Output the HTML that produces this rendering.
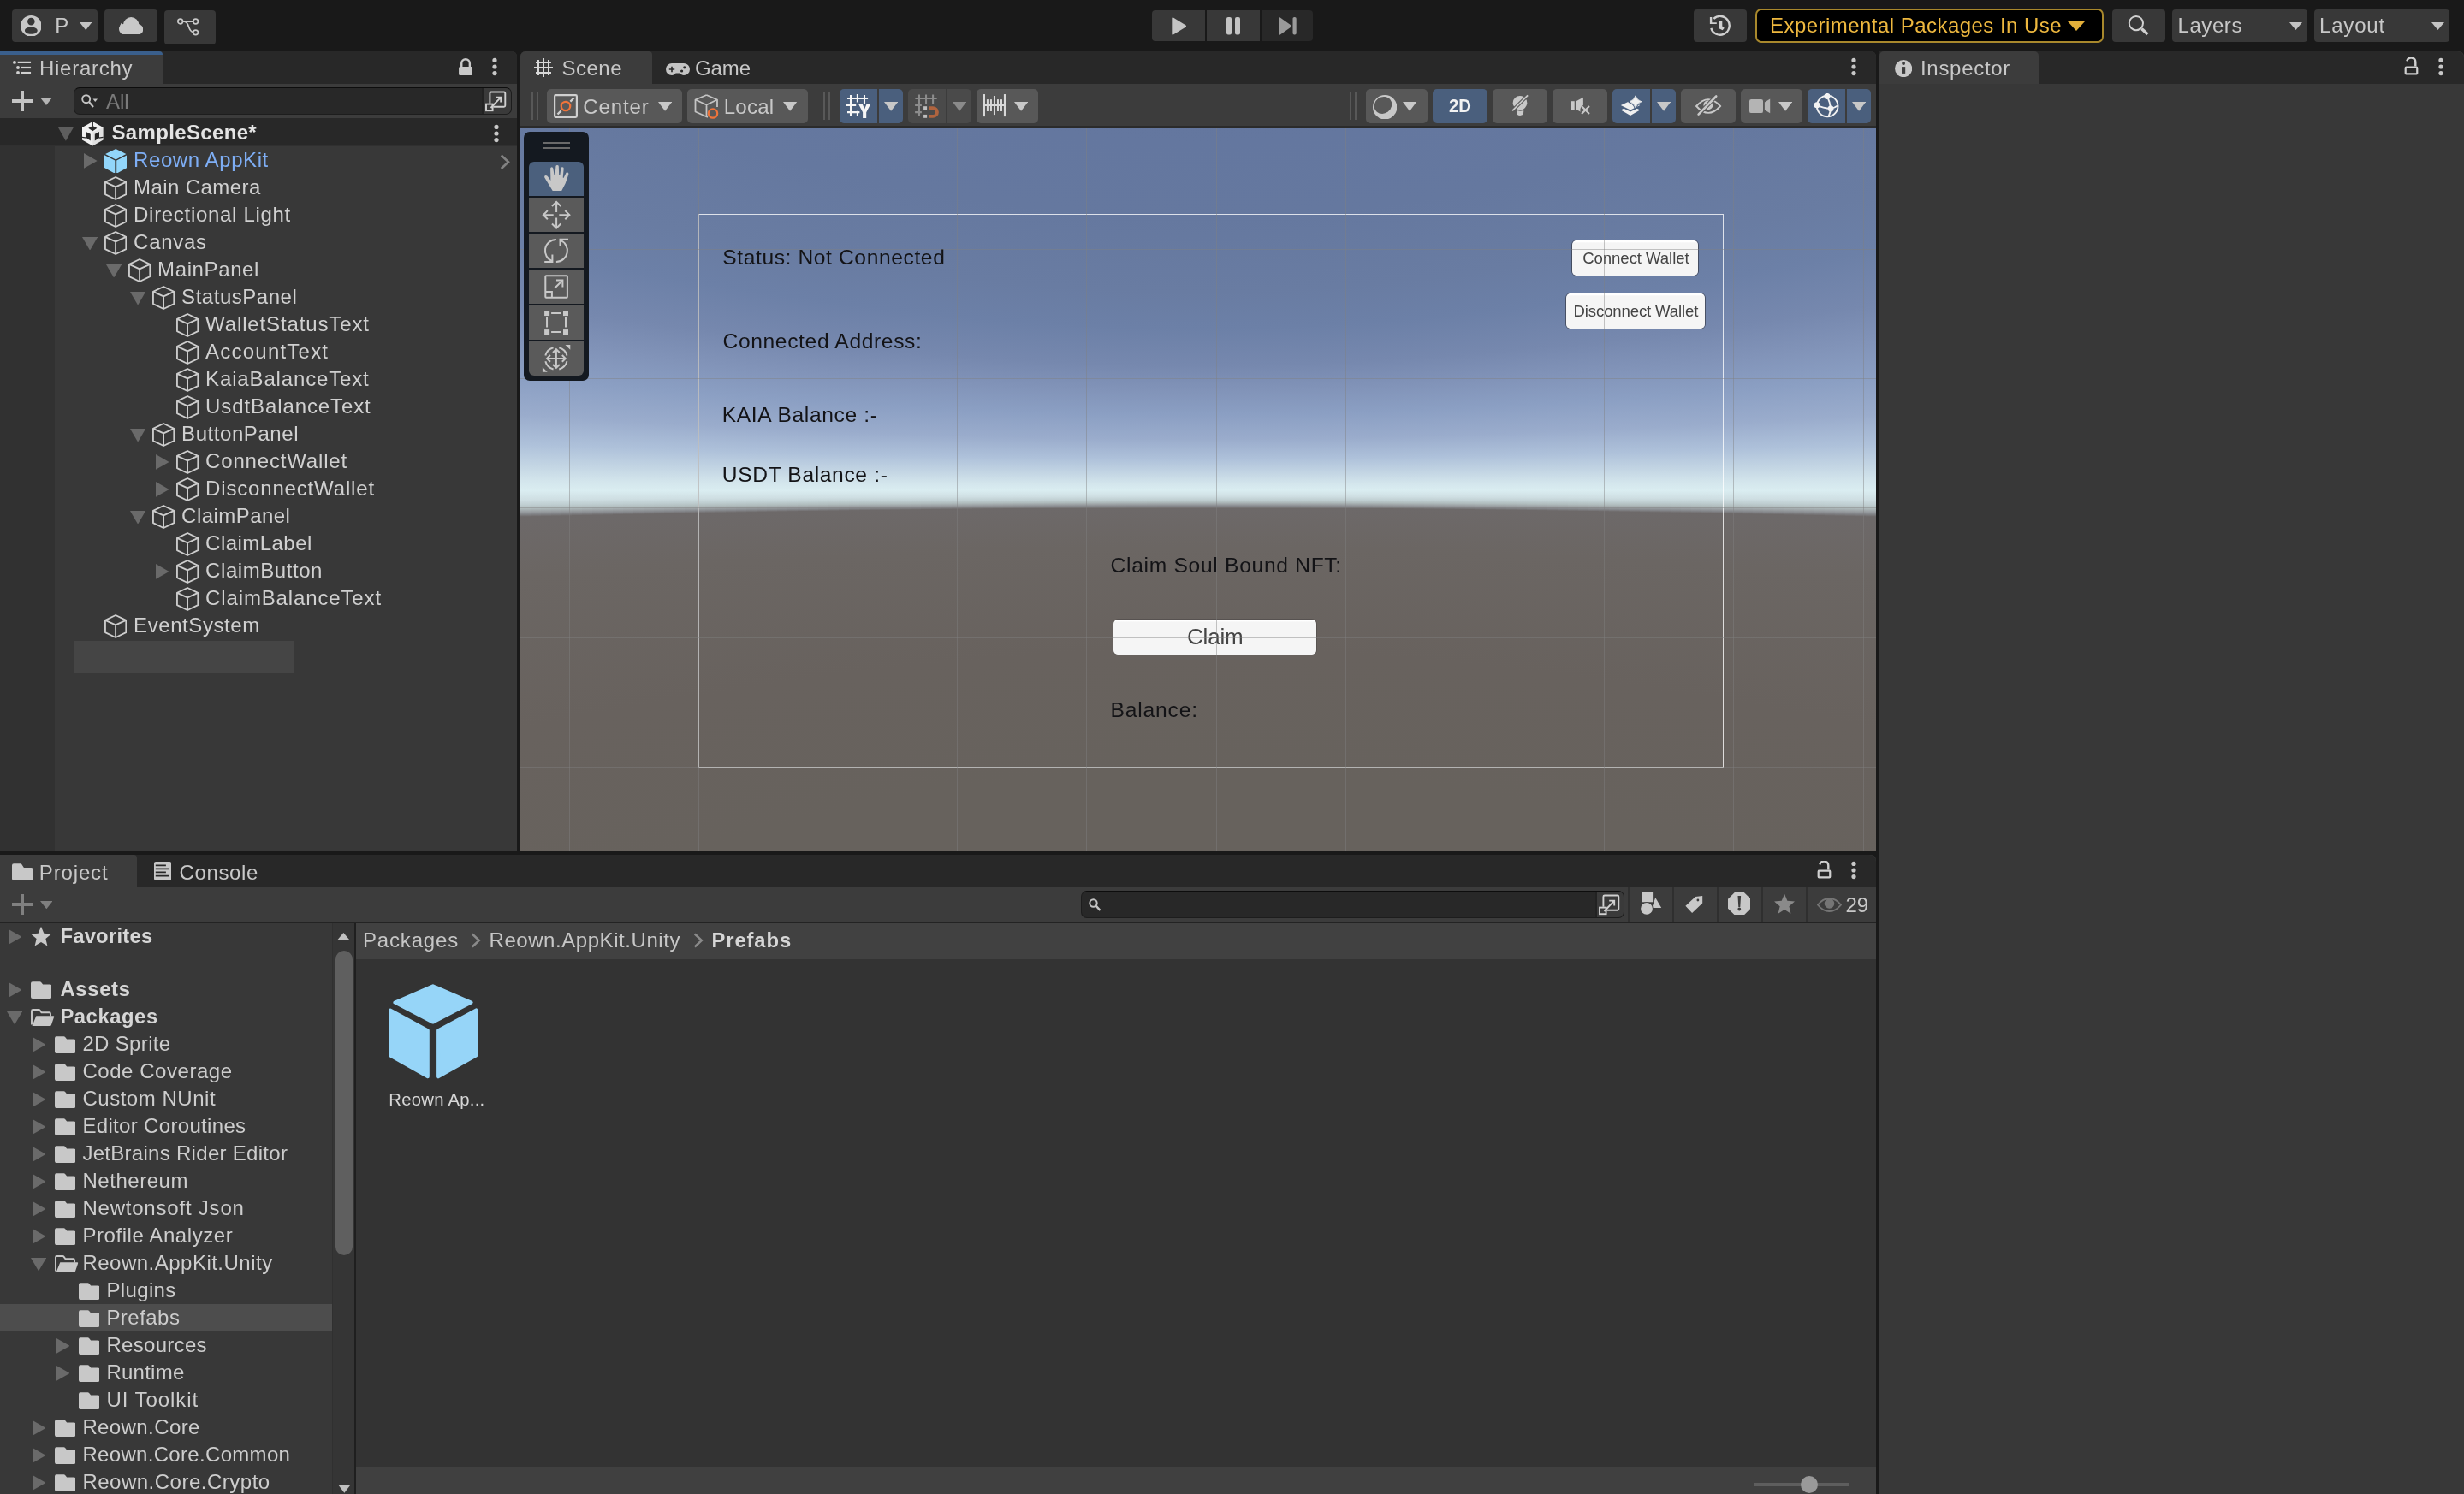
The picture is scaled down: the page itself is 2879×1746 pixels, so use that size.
<!DOCTYPE html>
<html><head><meta charset="utf-8"><title>Unity</title>
<style>
html,body{margin:0;padding:0;}
body{width:2879px;height:1746px;background:#191919;position:relative;overflow:hidden;font-family:"Liberation Sans",sans-serif;}
div,svg{position:absolute;}
.t{white-space:nowrap;line-height:1;}
#root{position:absolute;left:0;top:0;width:2879px;height:1746px;will-change:transform;-webkit-font-smoothing:antialiased;}
</style></head><body><div id="root">
<div style="left:14px;top:11px;width:100px;height:38px;background:#383838;border-radius:4px;"></div>
<div style="left:122px;top:11px;width:62px;height:38px;background:#383838;border-radius:4px;"></div>
<div style="left:192px;top:12px;width:60px;height:40px;background:#383838;border-radius:4px;"></div>
<svg style="left:23.7px;top:17.7px;" width="24.7" height="24.7" viewBox="0 0 24.7 24.7"><path fill="#c8c8c8" fill-rule="evenodd" d="M12.350 0a12.350 12.350 0 1 0 0 24.700a12.350 12.350 0 0 0 0-24.700z M12.350 2.800a4.300 4.300 0 1 1 0 8.600a4.300 4.300 0 0 1 0-8.600z M12.350 13.600c4.100 0 7.400 1.800 7.400 4.100s-3.300 4.100-7.400 4.100s-7.400-1.800-7.400-4.100s3.300-4.100 7.400-4.100z"/></svg>
<div class="t" style="left:64.3px;top:18.48px;font-size:24px;color:#c8c8c8;">P</div>
<svg style="left:92.75px;top:25.95px;" width="14.5" height="9.1" viewBox="0 0 14.5 9.1"><path d="M0 0H14.5 L7.25 9.1Z" fill="#c4c4c4"/></svg>
<svg style="left:138.9px;top:19.7px;" width="28.5" height="20.5" viewBox="0 0 28.5 20.5"><g fill="#c8c8c8"><circle cx="14.200" cy="9.100" r="9.100"/><circle cx="22.200" cy="14.200" r="6.100"/><circle cx="6.300" cy="14" r="6.300"/><rect x="6.300" y="10" width="16" height="10.300"/><path d="M0.800 11Q1.800 8.500 2.700 6.800Q4 9.500 7 10.500z"/></g></svg>
<svg style="left:206px;top:20px;" width="27" height="23" viewBox="0 0 27 23"><g fill="none" stroke="#c8c8c8" stroke-width="1.750"><circle cx="4.700" cy="5" r="2.800"/><circle cx="22.600" cy="5" r="2.800"/><circle cx="22.600" cy="17.800" r="2.800"/><path d="M7.500 5H19.800M9.500 5.200c6.500 0.800 3.500 11.500 10.400 12.400"/></g></svg>
<div style="left:1346px;top:12px;width:62px;height:36px;background:#383838;border-radius:4px 0 0 4px;"></div>
<div style="left:1410px;top:12px;width:62px;height:36px;background:#383838;"></div>
<div style="left:1474px;top:12px;width:60px;height:36px;background:#282828;border-radius:0 4px 4px 0;"></div>
<svg style="left:1368.5px;top:19.5px;" width="18" height="21" viewBox="0 0 18 21"><path fill="#c4c4c4" d="M0.300 1.300a1 1 0 0 1 1.500-0.900L16.500 9.600a1 1 0 0 1 0 1.800L1.800 20.600a1 1 0 0 1-1.500-0.900z"/></svg>
<svg style="left:1433px;top:19.5px;" width="16" height="21" viewBox="0 0 16 21"><rect x="0" y="0" width="6" height="20.500" rx="2" fill="#c4c4c4"/><rect x="10" y="0" width="6" height="20.500" rx="2" fill="#c4c4c4"/></svg>
<svg style="left:1493.5px;top:19.5px;" width="21" height="21" viewBox="0 0 21 21"><path fill="#9a9a9a" d="M0.300 1.300a1 1 0 0 1 1.500-0.900L14.500 9.600a1 1 0 0 1 0 1.800L1.800 20.600a1 1 0 0 1-1.500-0.900z"/><rect x="16.500" y="0" width="4.200" height="20.500" rx="1.800" fill="#9a9a9a"/></svg>
<div style="left:1979px;top:11px;width:62px;height:38px;background:#383838;border-radius:4px;"></div>
<svg style="left:1997px;top:17px;" width="26" height="26" viewBox="0 0 26 26"><path d="M5.370 4.830A10.900 10.900 0 1 1 2.320 15.800" fill="none" stroke="#d0d0d0" stroke-width="2.400"/><path d="M0.900 3H3.300V9.300H8.800V11H0.900z" fill="#d0d0d0"/><path d="M11.100 6.900H15.300V13.600L17.800 15.800L15.600 18.300L11.100 16z" fill="#d0d0d0"/></svg>
<div style="left:2051px;top:10px;width:407px;height:40px;background:#000;border-radius:7px;border:2px solid #a8882c;box-sizing:border-box;"></div>
<div class="t" style="left:2068px;top:18.48px;font-size:24px;color:#eeb83f;letter-spacing:0.46px;">Experimental Packages In Use</div>
<svg style="left:2416px;top:24.5px;" width="20" height="11" viewBox="0 0 20 11"><path d="M0 0H20 L10 11Z" fill="#e4b03a"/></svg>
<div style="left:2468px;top:11px;width:62px;height:38px;background:#383838;border-radius:4px;"></div>
<svg style="left:2486px;top:17px;" width="27" height="27" viewBox="0 0 27 27"><circle cx="9.900" cy="10.100" r="8.100" fill="none" stroke="#d0d0d0" stroke-width="2"/><path d="M16.300 16.400L23.400 23.100" stroke="#d0d0d0" stroke-width="3.500"/></svg>
<div style="left:2538px;top:11px;width:158px;height:38px;background:#383838;border-radius:4px;"></div>
<div class="t" style="left:2544.5px;top:18.48px;font-size:24px;color:#c8c8c8;letter-spacing:0.58px;">Layers</div>
<svg style="left:2674.5px;top:25.5px;" width="15" height="9" viewBox="0 0 15 9"><path d="M0 0H15 L7.5 9Z" fill="#c4c4c4"/></svg>
<div style="left:2704px;top:11px;width:158px;height:38px;background:#383838;border-radius:4px;"></div>
<div class="t" style="left:2710px;top:18.48px;font-size:24px;color:#c8c8c8;letter-spacing:0.82px;">Layout</div>
<svg style="left:2840.5px;top:25.5px;" width="15" height="9" viewBox="0 0 15 9"><path d="M0 0H15 L7.5 9Z" fill="#c4c4c4"/></svg>
<div style="left:0px;top:60px;width:604px;height:935px;background:#383838;border-radius:0 6px 0 0;"></div>
<div style="left:0px;top:60px;width:604px;height:38px;background:#282828;border-radius:0 6px 0 0;"></div>
<div style="left:0px;top:60px;width:190px;height:38px;background:#3c3c3c;border-radius:0 4px 0 0;"></div>
<div style="left:0px;top:60px;width:190px;height:4px;background:#3a5f8c;border-radius:0 4px 0 0;"></div>
<svg style="left:14px;top:70px;" width="23" height="18" viewBox="0 0 23 18"><circle cx="2.96" cy="2.9" r="1.950" fill="#d0d0d0"/><rect x="6.7" y="1.8" width="15.35" height="2.200" fill="#d0d0d0"/><circle cx="7" cy="9" r="1.950" fill="#d0d0d0"/><rect x="10.6" y="7.9" width="11.45" height="2.200" fill="#d0d0d0"/><circle cx="7" cy="15.05" r="1.950" fill="#d0d0d0"/><rect x="10.6" y="13.95" width="11.45" height="2.200" fill="#d0d0d0"/></svg>
<div class="t" style="left:46px;top:68.48px;font-size:24px;color:#c8c8c8;letter-spacing:0.72px;">Hierarchy</div>
<svg style="left:536px;top:68px;" width="16.3" height="20.2" viewBox="0 0 16.3 20.2"><path fill="none" stroke="#c8c8c8" stroke-width="2.400" d="M3.250 10.500V6a4.800 4.800 0 0 1 9.600 0V10.500"/><rect x="0.050" y="9.900" width="16.100" height="10.100" rx="1.600" fill="#c8c8c8"/></svg>
<svg style="left:574px;top:66px;" width="8" height="24" viewBox="0 0 8 24"><circle cx="4" cy="4.45" r="2.6" fill="#c8c8c8"/><circle cx="4" cy="12" r="2.6" fill="#c8c8c8"/><circle cx="4" cy="19.55" r="2.6" fill="#c8c8c8"/></svg>
<div style="left:0px;top:98px;width:604px;height:40px;background:#3c3c3c;"></div>
<svg style="left:14px;top:106px;" width="24" height="24" viewBox="0 0 24 24"><path d="M10 0h4v10h10v4H14v10h-4V14H0v-4h10z" fill="#c4c4c4"/></svg>
<svg style="left:47px;top:113.5px;" width="14" height="9" viewBox="0 0 14 9"><path d="M0 0H14 L7 9Z" fill="#b4b4b4"/></svg>
<div style="left:86px;top:102px;width:511.5px;height:32px;background:#282828;border-radius:7px;border:1px solid #1d1d1d;border-top-color:#0d0d0d;box-sizing:border-box;overflow:hidden;"><div style="left:475.500px;top:0;width:40px;height:32px;background:#3a3a3a;border-left:2.500px solid #222;"></div></div>
<svg style="left:95px;top:110px;" width="20" height="16" viewBox="0 0 20 16"><g fill="none" stroke="#c4c4c4" stroke-width="1.900"><circle cx="5.700" cy="5.700" r="4.500"/><path d="M9 9l5 6" stroke-width="2.200"/></g><path d="M13.500 5.500h5.500l-2.750 3.500z" fill="#c4c4c4"/></svg>
<div class="t" style="left:124px;top:106.68px;font-size:24px;color:#7a7a7a;">All</div>
<svg style="left:567px;top:105.5px;" width="25.5" height="25" viewBox="0 0 25.5 25"><g fill="none" stroke="#d0d0d0" stroke-width="1.900"><path d="M5.400 14.700V3a1.500 1.500 0 0 1 1.500-1.500H21.800a1.500 1.500 0 0 1 1.500 1.500V17.200a1.500 1.500 0 0 1-1.500 1.500H9.400"/><rect x="1" y="15.600" width="7.600" height="7.600"/><path d="M6.500 20L18.200 7.600M12.200 7.600H18.200V13.600"/></g></svg>
<div style="left:0px;top:138px;width:604px;height:32px;background:#282828;"></div>
<div style="left:0px;top:170px;width:604px;height:1px;background:#303030;"></div>
<div style="left:0px;top:171px;width:64px;height:824px;background:#313131;"></div>
<svg style="left:68px;top:148.9px;" width="17.8" height="15.8" viewBox="0 0 17.8 15.8"><path d="M0 0H17.8 L8.9 15.8Z" fill="#5e5e5e"/></svg>
<svg style="left:95.8px;top:141.6px;" width="25" height="29" viewBox="0 0 25 29"><path fill="#f0f0f0" fill-rule="evenodd" d="M12.300 0L24.600 7V21.400L12.300 28.500L0 21.400V7z M12.300 4.900L17.400 7.800L12.300 11.200L7.200 7.800z M4.600 11.900L9.800 14.800V22.400L4.600 19z M20 11.900V19L14.800 22.400V14.800z"/><path d="M12.300 0V5.200M0 18.300L5 19.200M24.600 18.300L19.600 19.200" stroke="#282828" stroke-width="1.300"/><path d="M12.300 12.500V28.500L24.600 21.400V7z" fill="#000" opacity=".06"/></svg>
<div class="t" style="left:130.5px;top:143.08px;font-size:24px;color:#e4e4e4;font-weight:bold;letter-spacing:0.34px;">SampleScene*</div>
<svg style="left:576px;top:144px;" width="8" height="24" viewBox="0 0 8 24"><circle cx="4" cy="4.45" r="2.6" fill="#c8c8c8"/><circle cx="4" cy="12" r="2.6" fill="#c8c8c8"/><circle cx="4" cy="19.55" r="2.6" fill="#c8c8c8"/></svg>
<svg style="left:98px;top:179.1px;" width="15.6" height="17.8" viewBox="0 0 15.6 17.8"><path d="M0 0V17.8 L15.6 8.9Z" fill="#6a6a6a"/></svg>
<svg style="left:121.8px;top:173.7px;" width="26.5" height="28.8" viewBox="0 0 26.500 28.800"><path fill="#92d6fa" d="M13.250 0L25.400 5.900L13.250 12.400L1.100 5.900z M0 7.300L12.300 13.500V28.800L0 21.900z M26.500 7.300V21.900L14.200 28.800V13.500z"/></svg>
<div class="t" style="left:156.1px;top:174.68px;font-size:24px;color:#7eaef5;letter-spacing:0.58px;">Reown AppKit</div>
<svg style="left:121.8px;top:206.2px;" width="26.4" height="28" viewBox="0 0 26.4 28"><g fill="none" stroke="#cdcdcd" stroke-width="1.850" stroke-linejoin="round"><path d="M13.100 1L25.300 6.800V21.100L13.100 27L0.950 21.100V6.800z"/><path d="M0.950 6.800L13.100 12.400L25.300 6.800M13.100 12.400V27"/></g></svg>
<div class="t" style="left:156.1px;top:206.68px;font-size:24px;color:#d0d0d0;letter-spacing:0.41px;">Main Camera</div>
<svg style="left:121.8px;top:238.2px;" width="26.4" height="28" viewBox="0 0 26.4 28"><g fill="none" stroke="#cdcdcd" stroke-width="1.850" stroke-linejoin="round"><path d="M13.100 1L25.300 6.800V21.100L13.100 27L0.950 21.100V6.800z"/><path d="M0.950 6.800L13.100 12.400L25.300 6.800M13.100 12.400V27"/></g></svg>
<div class="t" style="left:156.1px;top:238.68px;font-size:24px;color:#d0d0d0;letter-spacing:0.69px;">Directional Light</div>
<svg style="left:95.8px;top:276.9px;" width="18.2" height="15.6" viewBox="0 0 18.2 15.6"><path d="M0 0H18.2 L9.1 15.6Z" fill="#6a6a6a"/></svg>
<svg style="left:121.8px;top:270.2px;" width="26.4" height="28" viewBox="0 0 26.4 28"><g fill="none" stroke="#cdcdcd" stroke-width="1.850" stroke-linejoin="round"><path d="M13.100 1L25.300 6.800V21.100L13.100 27L0.950 21.100V6.800z"/><path d="M0.950 6.800L13.100 12.400L25.300 6.800M13.100 12.400V27"/></g></svg>
<div class="t" style="left:156.1px;top:270.68px;font-size:24px;color:#d0d0d0;letter-spacing:0.72px;">Canvas</div>
<svg style="left:123.8px;top:308.9px;" width="18.2" height="15.6" viewBox="0 0 18.2 15.6"><path d="M0 0H18.2 L9.1 15.6Z" fill="#6a6a6a"/></svg>
<svg style="left:149.8px;top:302.2px;" width="26.4" height="28" viewBox="0 0 26.4 28"><g fill="none" stroke="#cdcdcd" stroke-width="1.850" stroke-linejoin="round"><path d="M13.100 1L25.300 6.800V21.100L13.100 27L0.950 21.100V6.800z"/><path d="M0.950 6.800L13.100 12.400L25.300 6.800M13.100 12.400V27"/></g></svg>
<div class="t" style="left:184.1px;top:302.68px;font-size:24px;color:#d0d0d0;letter-spacing:0.61px;">MainPanel</div>
<svg style="left:151.8px;top:340.9px;" width="18.2" height="15.6" viewBox="0 0 18.2 15.6"><path d="M0 0H18.2 L9.1 15.6Z" fill="#6a6a6a"/></svg>
<svg style="left:177.8px;top:334.2px;" width="26.4" height="28" viewBox="0 0 26.4 28"><g fill="none" stroke="#cdcdcd" stroke-width="1.850" stroke-linejoin="round"><path d="M13.100 1L25.300 6.800V21.100L13.100 27L0.950 21.100V6.800z"/><path d="M0.950 6.800L13.100 12.400L25.300 6.800M13.100 12.400V27"/></g></svg>
<div class="t" style="left:212.1px;top:334.68px;font-size:24px;color:#d0d0d0;letter-spacing:0.53px;">StatusPanel</div>
<svg style="left:205.8px;top:366.2px;" width="26.4" height="28" viewBox="0 0 26.4 28"><g fill="none" stroke="#cdcdcd" stroke-width="1.850" stroke-linejoin="round"><path d="M13.100 1L25.300 6.800V21.100L13.100 27L0.950 21.100V6.800z"/><path d="M0.950 6.800L13.100 12.400L25.300 6.800M13.100 12.400V27"/></g></svg>
<div class="t" style="left:240.1px;top:366.68px;font-size:24px;color:#d0d0d0;letter-spacing:0.87px;">WalletStatusText</div>
<svg style="left:205.8px;top:398.2px;" width="26.4" height="28" viewBox="0 0 26.4 28"><g fill="none" stroke="#cdcdcd" stroke-width="1.850" stroke-linejoin="round"><path d="M13.100 1L25.300 6.800V21.100L13.100 27L0.950 21.100V6.800z"/><path d="M0.950 6.800L13.100 12.400L25.300 6.800M13.100 12.400V27"/></g></svg>
<div class="t" style="left:240.1px;top:398.68px;font-size:24px;color:#d0d0d0;letter-spacing:1.22px;">AccountText</div>
<svg style="left:205.8px;top:430.2px;" width="26.4" height="28" viewBox="0 0 26.4 28"><g fill="none" stroke="#cdcdcd" stroke-width="1.850" stroke-linejoin="round"><path d="M13.100 1L25.300 6.800V21.100L13.100 27L0.950 21.100V6.800z"/><path d="M0.950 6.800L13.100 12.400L25.300 6.800M13.100 12.400V27"/></g></svg>
<div class="t" style="left:240.1px;top:430.68px;font-size:24px;color:#d0d0d0;letter-spacing:0.85px;">KaiaBalanceText</div>
<svg style="left:205.8px;top:462.2px;" width="26.4" height="28" viewBox="0 0 26.4 28"><g fill="none" stroke="#cdcdcd" stroke-width="1.850" stroke-linejoin="round"><path d="M13.100 1L25.300 6.800V21.100L13.100 27L0.950 21.100V6.800z"/><path d="M0.950 6.800L13.100 12.400L25.300 6.800M13.100 12.400V27"/></g></svg>
<div class="t" style="left:240.1px;top:462.68px;font-size:24px;color:#d0d0d0;letter-spacing:0.9px;">UsdtBalanceText</div>
<svg style="left:151.8px;top:500.9px;" width="18.2" height="15.6" viewBox="0 0 18.2 15.6"><path d="M0 0H18.2 L9.1 15.6Z" fill="#6a6a6a"/></svg>
<svg style="left:177.8px;top:494.2px;" width="26.4" height="28" viewBox="0 0 26.4 28"><g fill="none" stroke="#cdcdcd" stroke-width="1.850" stroke-linejoin="round"><path d="M13.100 1L25.300 6.800V21.100L13.100 27L0.950 21.100V6.800z"/><path d="M0.950 6.800L13.100 12.400L25.300 6.800M13.100 12.400V27"/></g></svg>
<div class="t" style="left:212.1px;top:494.68px;font-size:24px;color:#d0d0d0;letter-spacing:0.56px;">ButtonPanel</div>
<svg style="left:182px;top:531.1px;" width="15.6" height="17.8" viewBox="0 0 15.6 17.8"><path d="M0 0V17.8 L15.6 8.9Z" fill="#6a6a6a"/></svg>
<svg style="left:205.8px;top:526.2px;" width="26.4" height="28" viewBox="0 0 26.4 28"><g fill="none" stroke="#cdcdcd" stroke-width="1.850" stroke-linejoin="round"><path d="M13.100 1L25.300 6.800V21.100L13.100 27L0.950 21.100V6.800z"/><path d="M0.950 6.800L13.100 12.400L25.300 6.800M13.100 12.400V27"/></g></svg>
<div class="t" style="left:240.1px;top:526.68px;font-size:24px;color:#d0d0d0;letter-spacing:0.82px;">ConnectWallet</div>
<svg style="left:182px;top:563.1px;" width="15.6" height="17.8" viewBox="0 0 15.6 17.8"><path d="M0 0V17.8 L15.6 8.9Z" fill="#6a6a6a"/></svg>
<svg style="left:205.8px;top:558.2px;" width="26.4" height="28" viewBox="0 0 26.4 28"><g fill="none" stroke="#cdcdcd" stroke-width="1.850" stroke-linejoin="round"><path d="M13.100 1L25.300 6.800V21.100L13.100 27L0.950 21.100V6.800z"/><path d="M0.950 6.800L13.100 12.400L25.300 6.800M13.100 12.400V27"/></g></svg>
<div class="t" style="left:240.1px;top:558.68px;font-size:24px;color:#d0d0d0;letter-spacing:0.83px;">DisconnectWallet</div>
<svg style="left:151.8px;top:596.9px;" width="18.2" height="15.6" viewBox="0 0 18.2 15.6"><path d="M0 0H18.2 L9.1 15.6Z" fill="#6a6a6a"/></svg>
<svg style="left:177.8px;top:590.2px;" width="26.4" height="28" viewBox="0 0 26.4 28"><g fill="none" stroke="#cdcdcd" stroke-width="1.850" stroke-linejoin="round"><path d="M13.100 1L25.300 6.800V21.100L13.100 27L0.950 21.100V6.800z"/><path d="M0.950 6.800L13.100 12.400L25.300 6.800M13.100 12.400V27"/></g></svg>
<div class="t" style="left:212.1px;top:590.68px;font-size:24px;color:#d0d0d0;letter-spacing:0.46px;">ClaimPanel</div>
<svg style="left:205.8px;top:622.2px;" width="26.4" height="28" viewBox="0 0 26.4 28"><g fill="none" stroke="#cdcdcd" stroke-width="1.850" stroke-linejoin="round"><path d="M13.100 1L25.300 6.800V21.100L13.100 27L0.950 21.100V6.800z"/><path d="M0.950 6.800L13.100 12.400L25.300 6.800M13.100 12.400V27"/></g></svg>
<div class="t" style="left:240.1px;top:622.68px;font-size:24px;color:#d0d0d0;letter-spacing:0.46px;">ClaimLabel</div>
<svg style="left:182px;top:659.1px;" width="15.6" height="17.8" viewBox="0 0 15.6 17.8"><path d="M0 0V17.8 L15.6 8.9Z" fill="#6a6a6a"/></svg>
<svg style="left:205.8px;top:654.2px;" width="26.4" height="28" viewBox="0 0 26.4 28"><g fill="none" stroke="#cdcdcd" stroke-width="1.850" stroke-linejoin="round"><path d="M13.100 1L25.300 6.800V21.100L13.100 27L0.950 21.100V6.800z"/><path d="M0.950 6.800L13.100 12.400L25.300 6.800M13.100 12.400V27"/></g></svg>
<div class="t" style="left:240.1px;top:654.68px;font-size:24px;color:#d0d0d0;letter-spacing:0.56px;">ClaimButton</div>
<svg style="left:205.8px;top:686.2px;" width="26.4" height="28" viewBox="0 0 26.4 28"><g fill="none" stroke="#cdcdcd" stroke-width="1.850" stroke-linejoin="round"><path d="M13.100 1L25.300 6.800V21.100L13.100 27L0.950 21.100V6.800z"/><path d="M0.950 6.800L13.100 12.400L25.300 6.800M13.100 12.400V27"/></g></svg>
<div class="t" style="left:240.1px;top:686.68px;font-size:24px;color:#d0d0d0;letter-spacing:0.86px;">ClaimBalanceText</div>
<svg style="left:121.8px;top:718.2px;" width="26.4" height="28" viewBox="0 0 26.4 28"><g fill="none" stroke="#cdcdcd" stroke-width="1.850" stroke-linejoin="round"><path d="M13.100 1L25.300 6.800V21.100L13.100 27L0.950 21.100V6.800z"/><path d="M0.950 6.800L13.100 12.400L25.300 6.800M13.100 12.400V27"/></g></svg>
<div class="t" style="left:156.1px;top:718.68px;font-size:24px;color:#d0d0d0;letter-spacing:0.58px;">EventSystem</div>
<svg style="left:584px;top:180px;" width="12" height="19" viewBox="0 0 12 19"><path d="M1.700 1.500L10 9.200L1.700 17" fill="none" stroke="#828282" stroke-width="2.600"/></svg>
<div style="left:86px;top:749px;width:257px;height:38px;background:#454545;"></div>
<div style="left:608px;top:60px;width:1584px;height:935px;background:#3c3c3c;border-radius:6px 6px 0 0;"></div>
<div style="left:608px;top:60px;width:1584px;height:38px;background:#282828;border-radius:6px 6px 0 0;"></div>
<div style="left:608px;top:60px;width:154px;height:38px;background:#3c3c3c;border-radius:6px 4px 0 0;"></div>
<svg style="left:624px;top:68px;" width="22" height="22" viewBox="0 0 22 22"><g stroke="#d8d8d8" stroke-width="2"><path d="M5 2v18M17 2v18M11 0v22M2 5h18M2 17h18M0 11h22"/></g></svg>
<div class="t" style="left:656.5px;top:68.48px;font-size:24px;color:#c8c8c8;letter-spacing:0.49px;">Scene</div>
<svg style="left:778px;top:74.1px;" width="28" height="15" viewBox="0 0 28 15"><path fill="#c4c4c4" fill-rule="evenodd" d="M7 0H21a7 7 0 0 1 0 14c-2 0-3.500-1-4.500-2.500h-5C10.500 13 9 14 7 14A7 7 0 0 1 7 0z M6.200 3.800v2.400H3.800v1.600h2.400v2.400h1.600V7.800h2.400V6.200H7.800V3.800z M21.800 3.200a1.600 1.600 0 1 0 0 3.200a1.600 1.600 0 0 0 0-3.200z M18.600 7.400a1.600 1.600 0 1 0 0 3.200a1.600 1.600 0 0 0 0-3.200z"/></svg>
<div class="t" style="left:812px;top:68.48px;font-size:24px;color:#c8c8c8;letter-spacing:-0.09px;">Game</div>
<svg style="left:2162px;top:66px;" width="8" height="24" viewBox="0 0 8 24"><circle cx="4" cy="4.45" r="2.6" fill="#c8c8c8"/><circle cx="4" cy="12" r="2.6" fill="#c8c8c8"/><circle cx="4" cy="19.55" r="2.6" fill="#c8c8c8"/></svg>
<div style="left:608px;top:147px;width:1584px;height:3px;background:#2b2b2b;"></div>
<div style="left:620.5px;top:108px;width:2px;height:32px;background:#585858;"></div>
<div style="left:626.5px;top:108px;width:2px;height:32px;background:#585858;"></div>
<div style="left:962px;top:108px;width:2px;height:32px;background:#585858;"></div>
<div style="left:968px;top:108px;width:2px;height:32px;background:#585858;"></div>
<div style="left:1577px;top:108px;width:2px;height:32px;background:#585858;"></div>
<div style="left:1583px;top:108px;width:2px;height:32px;background:#585858;"></div>
<div style="left:639px;top:104px;width:158px;height:40px;background:#585858;border-radius:5px;"></div>
<svg style="left:647px;top:110px;" width="28" height="28" viewBox="0 0 28 28"><rect x="1.100" y="1.100" width="25.800" height="25.800" rx="1.300" fill="none" stroke="#d0d0d0" stroke-width="2.200"/><path d="M4.500 23.500L8.600 19.400M19.400 8.600L23.500 4.500" stroke="#d0d0d0" stroke-width="2.300"/><circle cx="14" cy="14" r="5.200" fill="none" stroke="#f0743a" stroke-width="2.300"/></svg>
<div class="t" style="left:681.3px;top:112.68px;font-size:24px;color:#c8c8c8;letter-spacing:0.86px;">Center</div>
<svg style="left:768.9px;top:119px;" width="16.2" height="10.8" viewBox="0 0 16.2 10.8"><path d="M0 0H16.2 L8.1 10.8Z" fill="#c8c8c8"/></svg>
<div style="left:803px;top:104px;width:141px;height:40px;background:#585858;border-radius:5px;"></div>
<svg style="left:811px;top:109.9px;" width="30" height="30" viewBox="0 0 30 30"><g fill="none" stroke="#c4c4c4" stroke-width="1.800" stroke-linejoin="round"><path d="M14.500 1L27 6.500V15M16 27L1.500 20.500V6.500L14.500 1"/><path d="M1.500 6.500L14.500 12.500L27 6.500M14.500 12.500V26"/></g><circle cx="22" cy="22.500" r="5.200" fill="none" stroke="#f0743a" stroke-width="2.200"/></svg>
<div class="t" style="left:845.7px;top:112.68px;font-size:24px;color:#c8c8c8;letter-spacing:0.28px;">Local</div>
<svg style="left:915.4px;top:119px;" width="16.2" height="10.8" viewBox="0 0 16.2 10.8"><path d="M0 0H16.2 L8.1 10.8Z" fill="#c8c8c8"/></svg>
<div style="left:981px;top:104px;width:44px;height:40px;background:#4a5f7d;border-radius:5px 0 0 5px;"></div>
<div style="left:1027px;top:104px;width:28px;height:40px;background:#4a5f7d;border-radius:0 5px 5px 0;"></div>
<svg style="left:988px;top:109px;" width="30" height="30" viewBox="0 0 30 30"><g stroke="#f6f6f6" stroke-width="2.050"><path d="M6 2V26.100M13.900 1V10.500M13.900 20.800V26.900M22 2V12M2 6.050H26.100M1 14H12.200M2 22.100H16.400"/></g><path d="M15.300 13H19.900L22.150 18.400L24.400 13H29L24.200 22.200V29H20.100V22.200z" fill="#f6f6f6"/></svg>
<svg style="left:1032.9px;top:119px;" width="16.2" height="10.8" viewBox="0 0 16.2 10.8"><path d="M0 0H16.2 L8.1 10.8Z" fill="#c8c8c8"/></svg>
<div style="left:1061px;top:104px;width:44px;height:40px;background:#4a4a4a;border-radius:5px 0 0 5px;"></div>
<div style="left:1107px;top:104px;width:28px;height:40px;background:#4a4a4a;border-radius:0 5px 5px 0;"></div>
<svg style="left:1068px;top:109px;" width="30" height="30" viewBox="0 0 30 30"><g stroke="#8c8c8c" stroke-width="2.050"><path d="M6 1.500V26.600M14.050 1.500V12.500M22.100 1.500V12.500M1.400 6.050H26.700M1.100 14H8.900M1.100 22.100H8.900"/></g><rect x="11.100" y="15.200" width="4" height="3.800" fill="#bdbdbd"/><rect x="11.100" y="24.900" width="4" height="3.900" fill="#bdbdbd"/><path d="M17 17.150H22.100a4.850 4.850 0 0 1 0 9.700H17" fill="none" stroke="#b0643f" stroke-width="3.900"/></svg>
<svg style="left:1112.9px;top:119px;" width="16.2" height="10.8" viewBox="0 0 16.2 10.8"><path d="M0 0H16.2 L8.1 10.8Z" fill="#8a8a8a"/></svg>
<div style="left:1141px;top:104px;width:72px;height:40px;background:#585858;border-radius:5px;"></div>
<svg style="left:1148px;top:109px;" width="28" height="28" viewBox="0 0 28 28"><rect x="0.8" y="1.04" width="2.2" height="26.06" fill="#d8d8d8"/><rect x="4.92" y="7.1" width="2" height="13.9" fill="#d8d8d8"/><rect x="8.94" y="7.1" width="2" height="13.9" fill="#d8d8d8"/><rect x="12.96" y="3" width="2" height="22.1" fill="#d8d8d8"/><rect x="16.98" y="7.1" width="2" height="13.9" fill="#d8d8d8"/><rect x="21" y="7.1" width="2" height="13.9" fill="#d8d8d8"/><rect x="24.92" y="1.04" width="2.2" height="26.06" fill="#d8d8d8"/><rect x="1" y="12.700" width="26" height="2.300" fill="#d8d8d8"/></svg>
<svg style="left:1184.9px;top:119px;" width="16.2" height="10.8" viewBox="0 0 16.2 10.8"><path d="M0 0H16.2 L8.1 10.8Z" fill="#c8c8c8"/></svg>
<div style="left:1596px;top:104px;width:72px;height:40px;background:#585858;border-radius:5px;"></div>
<svg style="left:1603.7px;top:110.6px;" width="28.6" height="28.8" viewBox="0 0 28.6 28.8"><path fill="#c8c8c8" fill-rule="evenodd" d="M14.200 0.100a14.200 14.200 0 1 0 0 28.400a14.200 14.200 0 0 0 0-28.400z M20.680 5.820A10.600 9.400 -35 1 0 3.320 17.980A10.600 9.400 -35 1 0 20.680 5.820z"/></svg>
<svg style="left:1639.4px;top:119px;" width="16.2" height="10.8" viewBox="0 0 16.2 10.8"><path d="M0 0H16.2 L8.1 10.8Z" fill="#c8c8c8"/></svg>
<div style="left:1674px;top:104px;width:64px;height:40px;background:#4a5f7d;border-radius:5px;"></div>
<div class="t" style="left:1692.8px;top:112.67px;font-size:22.6px;color:#f2f2f2;font-weight:bold;transform:scaleX(.9);transform-origin:0 0;">2D</div>
<div style="left:1744px;top:104px;width:64px;height:40px;background:#585858;border-radius:5px;"></div>
<svg style="left:1764px;top:110px;" width="24" height="27" viewBox="0 0 24 27"><path d="M8 18.300h8.200v2.600a4.100 4.100 0 0 1-8.200 0z" fill="#c8c8c8"/><circle cx="12" cy="10.200" r="9.500" fill="#585858"/><circle cx="12" cy="10.200" r="8.300" fill="#c8c8c8"/><path d="M3.800 18.700L20.400 2.100" stroke="#585858" stroke-width="4"/><path d="M3.100 19.400L21.100 1.400" stroke="#c8c8c8" stroke-width="1.900"/></svg>
<div style="left:1814px;top:104px;width:64px;height:40px;background:#585858;border-radius:5px;"></div>
<svg style="left:1834px;top:112px;" width="26" height="24" viewBox="0 0 26 24"><rect x="2" y="6.200" width="3.700" height="9.850" fill="#c8c8c8"/><path d="M8 6.050L15.900 1.800V20.300L8 16.050z" fill="#c8c8c8"/><circle cx="18.500" cy="16.600" r="6.300" fill="#585858"/><path d="M14 12.100l9 9M23 12.100l-9 9" stroke="#c8c8c8" stroke-width="2.100"/></svg>
<div style="left:1884px;top:104px;width:44px;height:40px;background:#4a5f7d;border-radius:5px 0 0 5px;"></div>
<div style="left:1930px;top:104px;width:28px;height:40px;background:#4a5f7d;border-radius:0 5px 5px 0;"></div>
<svg style="left:1893px;top:110px;" width="27" height="27" viewBox="0 0 27 27"><path fill="#f0f0f0" d="M0.800 18.400L4.300 16.800L12 20.400L19.700 16.800L23.200 18.400L12 25.100z"/><path fill="#f0f0f0" d="M0.800 13L12 7.800L23.200 13L12 18.400z"/><path d="M18 1.800Q19.600 7.200 25 8.800Q19.600 10.400 18 15.800Q16.400 10.400 11 8.800Q16.400 7.200 18 1.800z" fill="#4a5f7d" stroke="#4a5f7d" stroke-width="3.200" stroke-linejoin="round"/><path d="M18 1.800Q19.600 7.200 25 8.800Q19.600 10.400 18 15.800Q16.400 10.400 11 8.800Q16.400 7.200 18 1.800z" fill="#f0f0f0" stroke="#f0f0f0" stroke-width="0.800" stroke-linejoin="round"/></svg>
<svg style="left:1935.9px;top:119px;" width="16.2" height="10.8" viewBox="0 0 16.2 10.8"><path d="M0 0H16.2 L8.1 10.8Z" fill="#c8c8c8"/></svg>
<div style="left:1964px;top:104px;width:64px;height:40px;background:#585858;border-radius:5px;"></div>
<svg style="left:1981px;top:110px;" width="31" height="27" viewBox="0 0 31 27"><path fill="none" stroke="#c8c8c8" stroke-width="1.900" d="M1.100 14Q15 -1.700 29.100 14Q15 29.700 1.100 14z"/><circle cx="14.900" cy="12.700" r="5.500" fill="#c8c8c8"/><path d="M4.400 22.800L23.300 3.300" stroke="#585858" stroke-width="4.800"/><path d="M3.600 23.600L24.200 2.500" stroke="#c8c8c8" stroke-width="2.600" stroke-linecap="round"/></svg>
<div style="left:2034px;top:104px;width:72px;height:40px;background:#585858;border-radius:5px;"></div>
<svg style="left:2044px;top:114px;" width="25" height="20" viewBox="0 0 25 20"><rect x="0" y="1.900" width="16" height="16.200" rx="2.200" fill="#b4b4b4"/><path d="M17.900 5.500L24.200 1.600V18.300L17.900 14.600z" fill="#b4b4b4"/></svg>
<svg style="left:2077.9px;top:119px;" width="16.2" height="10.8" viewBox="0 0 16.2 10.8"><path d="M0 0H16.2 L8.1 10.8Z" fill="#c8c8c8"/></svg>
<div style="left:2112px;top:104px;width:44px;height:40px;background:#4a5f7d;border-radius:5px 0 0 5px;"></div>
<div style="left:2158px;top:104px;width:28px;height:40px;background:#4a5f7d;border-radius:0 5px 5px 0;"></div>
<svg style="left:2119px;top:109px;" width="31" height="31" viewBox="0 0 31 31"><g fill="none" stroke="#f2f2f2" stroke-width="1.900"><circle cx="16.200" cy="15" r="12.300"/><path d="M15.900 3.300Q19.200 10 20.100 17.900Q19.500 23 17.500 27.200M3.900 13.700Q11 17.600 20.100 17.900Q25 16.600 28 14.400"/></g><circle cx="15.900" cy="3.400" r="3.500" fill="#f2f2f2"/><circle cx="4" cy="13.700" r="3.500" fill="#f2f2f2"/><circle cx="20.100" cy="17.900" r="3.400" fill="#f2f2f2"/></svg>
<svg style="left:2163.9px;top:119px;" width="16.2" height="10.8" viewBox="0 0 16.2 10.8"><path d="M0 0H16.2 L8.1 10.8Z" fill="#c8c8c8"/></svg>
<div style="left:608px;top:150px;width:1584px;height:845px;overflow:hidden;background:#67625d;"><div style="left:0px;top:0;width:12px;height:845px;background:linear-gradient(to bottom,#64779f -178.3px,#65789f -50.3px,#697ca2 79.1px,#6c80a7 143.1px,#7688ae 207.2px,#8193b8 249.8px,#8b9fc3 292.5px,#9aaccc 335.2px,#aec1da 369.3px,#c4d6e4 394.9px,#d3e5ec 411.6px,#daedf1 423.5px,#cfdfe3 433.8px,#c0cfd2 439.8px,#b0bcbd 444.2px,#9a9fa2 447.9px,#84868a 450.9px,#6d6969 453.8px,#6b6663 522.7px,#68625e 700.3px,#67625d 907.6px);"></div><div style="left:12px;top:0;width:12px;height:845px;background:linear-gradient(to bottom,#64779f -173.4px,#65789f -46.4px,#697ca2 82px,#6c80a7 145.4px,#7688ae 209px,#8193b8 251.2px,#8b9fc3 293.5px,#9aaccc 336px,#aec1da 369.7px,#c4d6e4 395.1px,#d3e5ec 411.7px,#daedf1 423.5px,#cfdfe3 433.7px,#c0cfd2 439.6px,#b0bcbd 444px,#9a9fa2 447.7px,#84868a 450.6px,#6d6969 453.6px,#6b6663 521.8px,#68625e 698px,#67625d 903.6px);"></div><div style="left:24px;top:0;width:12px;height:845px;background:linear-gradient(to bottom,#64779f -168.4px,#65789f -42.5px,#697ca2 84.8px,#6c80a7 147.7px,#7688ae 210.7px,#8193b8 252.7px,#8b9fc3 294.6px,#9aaccc 336.7px,#aec1da 370.2px,#c4d6e4 395.4px,#d3e5ec 411.8px,#daedf1 423.5px,#cfdfe3 433.6px,#c0cfd2 439.5px,#b0bcbd 443.8px,#9a9fa2 447.5px,#84868a 450.4px,#6d6969 453.3px,#6b6663 521px,#68625e 695.7px,#67625d 899.6px);"></div><div style="left:36px;top:0;width:12px;height:845px;background:linear-gradient(to bottom,#64779f -163.5px,#65789f -38.6px,#697ca2 87.6px,#6c80a7 150px,#7688ae 212.5px,#8193b8 254.1px,#8b9fc3 295.7px,#9aaccc 337.4px,#aec1da 370.6px,#c4d6e4 395.6px,#d3e5ec 411.9px,#daedf1 423.4px,#cfdfe3 433.6px,#c0cfd2 439.3px,#b0bcbd 443.7px,#9a9fa2 447.3px,#84868a 450.2px,#6d6969 453px,#6b6663 520.2px,#68625e 693.5px,#67625d 895.6px);"></div><div style="left:48px;top:0;width:12px;height:845px;background:linear-gradient(to bottom,#64779f -158.7px,#65789f -34.8px,#697ca2 90.3px,#6c80a7 152.2px,#7688ae 214.2px,#8193b8 255.5px,#8b9fc3 296.7px,#9aaccc 338.1px,#aec1da 371px,#c4d6e4 395.8px,#d3e5ec 412px,#daedf1 423.4px,#cfdfe3 433.5px,#c0cfd2 439.2px,#b0bcbd 443.5px,#9a9fa2 447.1px,#84868a 449.9px,#6d6969 452.8px,#6b6663 519.4px,#68625e 691.2px,#67625d 891.7px);"></div><div style="left:60px;top:0;width:12px;height:845px;background:linear-gradient(to bottom,#64779f -153.9px,#65789f -31px,#697ca2 93.1px,#6c80a7 154.4px,#7688ae 215.9px,#8193b8 256.8px,#8b9fc3 297.7px,#9aaccc 338.8px,#aec1da 371.4px,#c4d6e4 396px,#d3e5ec 412.1px,#daedf1 423.4px,#cfdfe3 433.4px,#c0cfd2 439px,#b0bcbd 443.3px,#9a9fa2 446.9px,#84868a 449.7px,#6d6969 452.5px,#6b6663 518.6px,#68625e 689px,#67625d 887.8px);"></div><div style="left:72px;top:0;width:12px;height:845px;background:linear-gradient(to bottom,#64779f -149.1px,#65789f -27.3px,#697ca2 95.8px,#6c80a7 156.7px,#7688ae 217.7px,#8193b8 258.2px,#8b9fc3 298.8px,#9aaccc 339.5px,#aec1da 371.9px,#c4d6e4 396.2px,#d3e5ec 412.1px,#daedf1 423.4px,#cfdfe3 433.3px,#c0cfd2 438.9px,#b0bcbd 443.1px,#9a9fa2 446.6px,#84868a 449.5px,#6d6969 452.3px,#6b6663 517.8px,#68625e 686.8px,#67625d 883.9px);"></div><div style="left:84px;top:0;width:12px;height:845px;background:linear-gradient(to bottom,#64779f -144.3px,#65789f -23.5px,#697ca2 98.5px,#6c80a7 158.9px,#7688ae 219.3px,#8193b8 259.6px,#8b9fc3 299.8px,#9aaccc 340.2px,#aec1da 372.3px,#c4d6e4 396.4px,#d3e5ec 412.2px,#daedf1 423.4px,#cfdfe3 433.2px,#c0cfd2 438.8px,#b0bcbd 442.9px,#9a9fa2 446.4px,#84868a 449.2px,#6d6969 452px,#6b6663 517px,#68625e 684.6px,#67625d 880.1px);"></div><div style="left:96px;top:0;width:12px;height:845px;background:linear-gradient(to bottom,#64779f -139.6px,#65789f -19.8px,#697ca2 101.2px,#6c80a7 161.1px,#7688ae 221px,#8193b8 260.9px,#8b9fc3 300.8px,#9aaccc 340.8px,#aec1da 372.7px,#c4d6e4 396.7px,#d3e5ec 412.3px,#daedf1 423.4px,#cfdfe3 433.1px,#c0cfd2 438.6px,#b0bcbd 442.8px,#9a9fa2 446.2px,#84868a 449px,#6d6969 451.8px,#6b6663 516.2px,#68625e 682.4px,#67625d 876.3px);"></div><div style="left:108px;top:0;width:12px;height:845px;background:linear-gradient(to bottom,#64779f -135px,#65789f -16.2px,#697ca2 103.9px,#6c80a7 163.2px,#7688ae 222.7px,#8193b8 262.3px,#8b9fc3 301.8px,#9aaccc 341.5px,#aec1da 373.1px,#c4d6e4 396.9px,#d3e5ec 412.4px,#daedf1 423.4px,#cfdfe3 433px,#c0cfd2 438.5px,#b0bcbd 442.6px,#9a9fa2 446px,#84868a 448.8px,#6d6969 451.5px,#6b6663 515.4px,#68625e 680.2px,#67625d 872.5px);"></div><div style="left:120px;top:0;width:12px;height:845px;background:linear-gradient(to bottom,#64779f -130.4px,#65789f -12.5px,#697ca2 106.5px,#6c80a7 165.4px,#7688ae 224.3px,#8193b8 263.6px,#8b9fc3 302.8px,#9aaccc 342.2px,#aec1da 373.5px,#c4d6e4 397.1px,#d3e5ec 412.5px,#daedf1 423.4px,#cfdfe3 432.9px,#c0cfd2 438.3px,#b0bcbd 442.4px,#9a9fa2 445.8px,#84868a 448.6px,#6d6969 451.3px,#6b6663 514.6px,#68625e 678.1px,#67625d 868.8px);"></div><div style="left:132px;top:0;width:12px;height:845px;background:linear-gradient(to bottom,#64779f -125.8px,#65789f -9px,#697ca2 109.1px,#6c80a7 167.5px,#7688ae 226px,#8193b8 264.9px,#8b9fc3 303.8px,#9aaccc 342.8px,#aec1da 373.9px,#c4d6e4 397.3px,#d3e5ec 412.5px,#daedf1 423.4px,#cfdfe3 432.8px,#c0cfd2 438.2px,#b0bcbd 442.3px,#9a9fa2 445.6px,#84868a 448.3px,#6d6969 451px,#6b6663 513.9px,#68625e 676px,#67625d 865.1px);"></div><div style="left:144px;top:0;width:12px;height:845px;background:linear-gradient(to bottom,#64779f -121.3px,#65789f -5.4px,#697ca2 111.7px,#6c80a7 169.6px,#7688ae 227.6px,#8193b8 266.2px,#8b9fc3 304.8px,#9aaccc 343.5px,#aec1da 374.3px,#c4d6e4 397.5px,#d3e5ec 412.6px,#daedf1 423.3px,#cfdfe3 432.7px,#c0cfd2 438.1px,#b0bcbd 442.1px,#9a9fa2 445.4px,#84868a 448.1px,#6d6969 450.8px,#6b6663 513.1px,#68625e 673.9px,#67625d 861.5px);"></div><div style="left:156px;top:0;width:12px;height:845px;background:linear-gradient(to bottom,#64779f -116.8px,#65789f -1.9px,#697ca2 114.3px,#6c80a7 171.7px,#7688ae 229.2px,#8193b8 267.5px,#8b9fc3 305.7px,#9aaccc 344.1px,#aec1da 374.7px,#c4d6e4 397.7px,#d3e5ec 412.7px,#daedf1 423.3px,#cfdfe3 432.6px,#c0cfd2 437.9px,#b0bcbd 441.9px,#9a9fa2 445.3px,#84868a 447.9px,#6d6969 450.6px,#6b6663 512.4px,#68625e 671.8px,#67625d 857.8px);"></div><div style="left:168px;top:0;width:12px;height:845px;background:linear-gradient(to bottom,#64779f -112.4px,#65789f 1.6px,#697ca2 116.8px,#6c80a7 173.7px,#7688ae 230.8px,#8193b8 268.7px,#8b9fc3 306.7px,#9aaccc 344.8px,#aec1da 375.1px,#c4d6e4 397.9px,#d3e5ec 412.8px,#daedf1 423.3px,#cfdfe3 432.5px,#c0cfd2 437.8px,#b0bcbd 441.8px,#9a9fa2 445.1px,#84868a 447.7px,#6d6969 450.3px,#6b6663 511.6px,#68625e 669.8px,#67625d 854.3px);"></div><div style="left:180px;top:0;width:12px;height:845px;background:linear-gradient(to bottom,#63769e -194.9px,#64779f -108px,#65789f 5px,#697ca2 119.3px,#6c80a7 175.8px,#7688ae 232.3px,#8193b8 270px,#8b9fc3 307.6px,#9aaccc 345.4px,#aec1da 375.5px,#c4d6e4 398.1px,#d3e5ec 412.9px,#daedf1 423.3px,#cfdfe3 432.5px,#c0cfd2 437.7px,#b0bcbd 441.6px,#9a9fa2 444.9px,#84868a 447.5px,#6d6969 450.1px,#6b6663 510.9px,#68625e 667.7px,#67625d 850.7px);"></div><div style="left:192px;top:0;width:12px;height:845px;background:linear-gradient(to bottom,#63769e -189.9px,#64779f -103.7px,#65789f 8.5px,#697ca2 121.8px,#6c80a7 177.8px,#7688ae 233.9px,#8193b8 271.2px,#8b9fc3 308.6px,#9aaccc 346px,#aec1da 375.8px,#c4d6e4 398.3px,#d3e5ec 412.9px,#daedf1 423.3px,#cfdfe3 432.4px,#c0cfd2 437.6px,#b0bcbd 441.4px,#9a9fa2 444.7px,#84868a 447.3px,#6d6969 449.9px,#6b6663 510.2px,#68625e 665.7px,#67625d 847.2px);"></div><div style="left:204px;top:0;width:12px;height:845px;background:linear-gradient(to bottom,#63769e -184.9px,#64779f -99.4px,#65789f 11.8px,#697ca2 124.2px,#6c80a7 179.7px,#7688ae 235.4px,#8193b8 272.5px,#8b9fc3 309.5px,#9aaccc 346.6px,#aec1da 376.2px,#c4d6e4 398.5px,#d3e5ec 413px,#daedf1 423.3px,#cfdfe3 432.3px,#c0cfd2 437.4px,#b0bcbd 441.3px,#9a9fa2 444.5px,#84868a 447.1px,#6d6969 449.6px,#6b6663 509.4px,#68625e 663.7px,#67625d 843.8px);"></div><div style="left:216px;top:0;width:12px;height:845px;background:linear-gradient(to bottom,#63769e -180px,#64779f -95.2px,#65789f 15.1px,#697ca2 126.6px,#6c80a7 181.7px,#7688ae 236.9px,#8193b8 273.7px,#8b9fc3 310.4px,#9aaccc 347.3px,#aec1da 376.6px,#c4d6e4 398.7px,#d3e5ec 413.1px,#daedf1 423.3px,#cfdfe3 432.2px,#c0cfd2 437.3px,#b0bcbd 441.1px,#9a9fa2 444.3px,#84868a 446.9px,#6d6969 449.4px,#6b6663 508.7px,#68625e 661.8px,#67625d 840.3px);"></div><div style="left:228px;top:0;width:12px;height:845px;background:linear-gradient(to bottom,#63769e -175.2px,#64779f -91px,#65789f 18.4px,#697ca2 129px,#6c80a7 183.6px,#7688ae 238.4px,#8193b8 274.9px,#8b9fc3 311.3px,#9aaccc 347.9px,#aec1da 377px,#c4d6e4 398.8px,#d3e5ec 413.1px,#daedf1 423.3px,#cfdfe3 432.1px,#c0cfd2 437.2px,#b0bcbd 441px,#9a9fa2 444.1px,#84868a 446.7px,#6d6969 449.2px,#6b6663 508px,#68625e 659.8px,#67625d 837px);"></div><div style="left:240px;top:0;width:12px;height:845px;background:linear-gradient(to bottom,#63769e -170.4px,#64779f -86.9px,#65789f 21.6px,#697ca2 131.3px,#6c80a7 185.6px,#7688ae 239.9px,#8193b8 276px,#8b9fc3 312.2px,#9aaccc 348.5px,#aec1da 377.3px,#c4d6e4 399px,#d3e5ec 413.2px,#daedf1 423.3px,#cfdfe3 432px,#c0cfd2 437.1px,#b0bcbd 440.8px,#9a9fa2 444px,#84868a 446.5px,#6d6969 449px,#6b6663 507.3px,#68625e 657.9px,#67625d 833.6px);"></div><div style="left:252px;top:0;width:12px;height:845px;background:linear-gradient(to bottom,#63769e -165.6px,#64779f -82.9px,#65789f 24.8px,#697ca2 133.7px,#6c80a7 187.4px,#7688ae 241.3px,#8193b8 277.2px,#8b9fc3 313.1px,#9aaccc 349px,#aec1da 377.7px,#c4d6e4 399.2px,#d3e5ec 413.3px,#daedf1 423.2px,#cfdfe3 432px,#c0cfd2 436.9px,#b0bcbd 440.7px,#9a9fa2 443.8px,#84868a 446.3px,#6d6969 448.8px,#6b6663 506.7px,#68625e 656.1px,#67625d 830.4px);"></div><div style="left:264px;top:0;width:12px;height:845px;background:linear-gradient(to bottom,#63769e -161px,#64779f -78.9px,#65789f 28px,#697ca2 135.9px,#6c80a7 189.3px,#7688ae 242.8px,#8193b8 278.4px,#8b9fc3 313.9px,#9aaccc 349.6px,#aec1da 378px,#c4d6e4 399.4px,#d3e5ec 413.4px,#daedf1 423.2px,#cfdfe3 431.9px,#c0cfd2 436.8px,#b0bcbd 440.5px,#9a9fa2 443.6px,#84868a 446.1px,#6d6969 448.6px,#6b6663 506px,#68625e 654.2px,#67625d 827.1px);"></div><div style="left:276px;top:0;width:12px;height:845px;background:linear-gradient(to bottom,#63769e -156.4px,#64779f -74.9px,#65789f 31.1px,#697ca2 138.2px,#6c80a7 191.1px,#7688ae 244.2px,#8193b8 279.5px,#8b9fc3 314.8px,#9aaccc 350.2px,#aec1da 378.4px,#c4d6e4 399.6px,#d3e5ec 413.4px,#daedf1 423.2px,#cfdfe3 431.8px,#c0cfd2 436.7px,#b0bcbd 440.4px,#9a9fa2 443.4px,#84868a 445.9px,#6d6969 448.3px,#6b6663 505.3px,#68625e 652.4px,#67625d 823.9px);"></div><div style="left:288px;top:0;width:12px;height:845px;background:linear-gradient(to bottom,#63769e -151.9px,#64779f -71px,#65789f 34.1px,#697ca2 140.4px,#6c80a7 192.9px,#7688ae 245.6px,#8193b8 280.6px,#8b9fc3 315.6px,#9aaccc 350.7px,#aec1da 378.7px,#c4d6e4 399.7px,#d3e5ec 413.5px,#daedf1 423.2px,#cfdfe3 431.7px,#c0cfd2 436.6px,#b0bcbd 440.2px,#9a9fa2 443.3px,#84868a 445.7px,#6d6969 448.1px,#6b6663 504.7px,#68625e 650.6px,#67625d 820.8px);"></div><div style="left:300px;top:0;width:12px;height:845px;background:linear-gradient(to bottom,#63769e -147.5px,#64779f -67.2px,#65789f 37.1px,#697ca2 142.6px,#6c80a7 194.7px,#7688ae 246.9px,#8193b8 281.7px,#8b9fc3 316.4px,#9aaccc 351.3px,#aec1da 379px,#c4d6e4 399.9px,#d3e5ec 413.6px,#daedf1 423.2px,#cfdfe3 431.7px,#c0cfd2 436.5px,#b0bcbd 440.1px,#9a9fa2 443.1px,#84868a 445.5px,#6d6969 447.9px,#6b6663 504px,#68625e 648.8px,#67625d 817.7px);"></div><div style="left:312px;top:0;width:12px;height:845px;background:linear-gradient(to bottom,#63769e -143.1px,#64779f -63.5px,#65789f 40.1px,#697ca2 144.7px,#6c80a7 196.4px,#7688ae 248.3px,#8193b8 282.8px,#8b9fc3 317.2px,#9aaccc 351.8px,#aec1da 379.4px,#c4d6e4 400.1px,#d3e5ec 413.6px,#daedf1 423.2px,#cfdfe3 431.6px,#c0cfd2 436.4px,#b0bcbd 440px,#9a9fa2 443px,#84868a 445.3px,#6d6969 447.7px,#6b6663 503.4px,#68625e 647.1px,#67625d 814.7px);"></div><div style="left:324px;top:0;width:12px;height:845px;background:linear-gradient(to bottom,#63769e -138.8px,#64779f -59.8px,#65789f 43px,#697ca2 146.8px,#6c80a7 198.1px,#7688ae 249.6px,#8193b8 283.8px,#8b9fc3 318px,#9aaccc 352.4px,#aec1da 379.7px,#c4d6e4 400.3px,#d3e5ec 413.7px,#daedf1 423.2px,#cfdfe3 431.5px,#c0cfd2 436.3px,#b0bcbd 439.8px,#9a9fa2 442.8px,#84868a 445.2px,#6d6969 447.5px,#6b6663 502.8px,#68625e 645.4px,#67625d 811.7px);"></div><div style="left:336px;top:0;width:12px;height:845px;background:linear-gradient(to bottom,#63769e -134.6px,#64779f -56.2px,#65789f 45.8px,#697ca2 148.9px,#6c80a7 199.8px,#7688ae 250.9px,#8193b8 284.9px,#8b9fc3 318.8px,#9aaccc 352.9px,#aec1da 380px,#c4d6e4 400.4px,#d3e5ec 413.7px,#daedf1 423.2px,#cfdfe3 431.4px,#c0cfd2 436.2px,#b0bcbd 439.7px,#9a9fa2 442.6px,#84868a 445px,#6d6969 447.4px,#6b6663 502.2px,#68625e 643.7px,#67625d 808.8px);"></div><div style="left:348px;top:0;width:12px;height:845px;background:linear-gradient(to bottom,#63769e -130.5px,#64779f -52.6px,#65789f 48.6px,#697ca2 150.9px,#6c80a7 201.5px,#7688ae 252.2px,#8193b8 285.9px,#8b9fc3 319.6px,#9aaccc 353.4px,#aec1da 380.3px,#c4d6e4 400.6px,#d3e5ec 413.8px,#daedf1 423.2px,#cfdfe3 431.4px,#c0cfd2 436px,#b0bcbd 439.6px,#9a9fa2 442.5px,#84868a 444.8px,#6d6969 447.2px,#6b6663 501.6px,#68625e 642.1px,#67625d 805.9px);"></div><div style="left:360px;top:0;width:12px;height:845px;background:linear-gradient(to bottom,#63769e -126.4px,#64779f -49.2px,#65789f 51.3px,#697ca2 152.9px,#6c80a7 203.1px,#7688ae 253.4px,#8193b8 286.9px,#8b9fc3 320.3px,#9aaccc 353.9px,#aec1da 380.6px,#c4d6e4 400.7px,#d3e5ec 413.9px,#daedf1 423.2px,#cfdfe3 431.3px,#c0cfd2 435.9px,#b0bcbd 439.4px,#9a9fa2 442.3px,#84868a 444.7px,#6d6969 447px,#6b6663 501px,#68625e 640.4px,#67625d 803.1px);"></div><div style="left:372px;top:0;width:12px;height:845px;background:linear-gradient(to bottom,#63769e -122.5px,#64779f -45.8px,#65789f 54px,#697ca2 154.8px,#6c80a7 204.7px,#7688ae 254.6px,#8193b8 287.8px,#8b9fc3 321.1px,#9aaccc 354.4px,#aec1da 380.9px,#c4d6e4 400.9px,#d3e5ec 413.9px,#daedf1 423.2px,#cfdfe3 431.2px,#c0cfd2 435.8px,#b0bcbd 439.3px,#9a9fa2 442.2px,#84868a 444.5px,#6d6969 446.8px,#6b6663 500.4px,#68625e 638.9px,#67625d 800.4px);"></div><div style="left:384px;top:0;width:12px;height:845px;background:linear-gradient(to bottom,#63769e -118.6px,#64779f -42.4px,#65789f 56.6px,#697ca2 156.7px,#6c80a7 206.2px,#7688ae 255.8px,#8193b8 288.8px,#8b9fc3 321.8px,#9aaccc 354.9px,#aec1da 381.2px,#c4d6e4 401px,#d3e5ec 414px,#daedf1 423.1px,#cfdfe3 431.2px,#c0cfd2 435.7px,#b0bcbd 439.2px,#9a9fa2 442px,#84868a 444.3px,#6d6969 446.6px,#6b6663 499.9px,#68625e 637.3px,#67625d 797.7px);"></div><div style="left:396px;top:0;width:12px;height:845px;background:linear-gradient(to bottom,#63769e -114.8px,#64779f -39.2px,#65789f 59.2px,#697ca2 158.6px,#6c80a7 207.7px,#7688ae 257px,#8193b8 289.7px,#8b9fc3 322.5px,#9aaccc 355.4px,#aec1da 381.5px,#c4d6e4 401.2px,#d3e5ec 414px,#daedf1 423.1px,#cfdfe3 431.1px,#c0cfd2 435.6px,#b0bcbd 439.1px,#9a9fa2 441.9px,#84868a 444.2px,#6d6969 446.5px,#6b6663 499.3px,#68625e 635.8px,#67625d 795px);"></div><div style="left:408px;top:0;width:12px;height:845px;background:linear-gradient(to bottom,#63769e -111.1px,#64779f -36px,#65789f 61.7px,#697ca2 160.4px,#6c80a7 209.2px,#7688ae 258.1px,#8193b8 290.6px,#8b9fc3 323.2px,#9aaccc 355.8px,#aec1da 381.8px,#c4d6e4 401.3px,#d3e5ec 414.1px,#daedf1 423.1px,#cfdfe3 431px,#c0cfd2 435.6px,#b0bcbd 438.9px,#9a9fa2 441.8px,#84868a 444px,#6d6969 446.3px,#6b6663 498.8px,#68625e 634.3px,#67625d 792.5px);"></div><div style="left:420px;top:0;width:12px;height:845px;background:linear-gradient(to bottom,#63769e -107.5px,#64779f -32.9px,#65789f 64.2px,#697ca2 162.2px,#6c80a7 210.7px,#7688ae 259.2px,#8193b8 291.5px,#8b9fc3 323.8px,#9aaccc 356.3px,#aec1da 382.1px,#c4d6e4 401.5px,#d3e5ec 414.1px,#daedf1 423.1px,#cfdfe3 431px,#c0cfd2 435.5px,#b0bcbd 438.8px,#9a9fa2 441.6px,#84868a 443.9px,#6d6969 446.1px,#6b6663 498.3px,#68625e 632.9px,#67625d 789.9px);"></div><div style="left:432px;top:0;width:12px;height:845px;background:linear-gradient(to bottom,#63769e -104px,#64779f -29.9px,#65789f 66.5px,#697ca2 163.9px,#6c80a7 212.1px,#7688ae 260.3px,#8193b8 292.4px,#8b9fc3 324.5px,#9aaccc 356.7px,#aec1da 382.3px,#c4d6e4 401.6px,#d3e5ec 414.2px,#daedf1 423.1px,#cfdfe3 430.9px,#c0cfd2 435.4px,#b0bcbd 438.7px,#9a9fa2 441.5px,#84868a 443.7px,#6d6969 446px,#6b6663 497.8px,#68625e 631.5px,#67625d 787.5px);"></div><div style="left:444px;top:0;width:12px;height:845px;background:linear-gradient(to bottom,#63769e -100.5px,#64779f -26.9px,#65789f 68.8px,#697ca2 165.6px,#6c80a7 213.4px,#7688ae 261.4px,#8193b8 293.2px,#8b9fc3 325.1px,#9aaccc 357.1px,#aec1da 382.6px,#c4d6e4 401.7px,#d3e5ec 414.3px,#daedf1 423.1px,#cfdfe3 430.9px,#c0cfd2 435.3px,#b0bcbd 438.6px,#9a9fa2 441.4px,#84868a 443.6px,#6d6969 445.8px,#6b6663 497.3px,#68625e 630.1px,#67625d 785.1px);"></div><div style="left:456px;top:0;width:12px;height:845px;background:linear-gradient(to bottom,#63769e -97.2px,#64779f -24.1px,#65789f 71.1px,#697ca2 167.2px,#6c80a7 214.8px,#7688ae 262.4px,#8193b8 294.1px,#8b9fc3 325.7px,#9aaccc 357.5px,#aec1da 382.8px,#c4d6e4 401.9px,#d3e5ec 414.3px,#daedf1 423.1px,#cfdfe3 430.8px,#c0cfd2 435.2px,#b0bcbd 438.5px,#9a9fa2 441.3px,#84868a 443.5px,#6d6969 445.7px,#6b6663 496.8px,#68625e 628.8px,#67625d 782.8px);"></div><div style="left:468px;top:0;width:12px;height:845px;background:linear-gradient(to bottom,#63769e -94px,#64779f -21.3px,#65789f 73.3px,#697ca2 168.8px,#6c80a7 216px,#7688ae 263.4px,#8193b8 294.9px,#8b9fc3 326.3px,#9aaccc 357.9px,#aec1da 383.1px,#c4d6e4 402px,#d3e5ec 414.3px,#daedf1 423.1px,#cfdfe3 430.7px,#c0cfd2 435.1px,#b0bcbd 438.4px,#9a9fa2 441.1px,#84868a 443.3px,#6d6969 445.5px,#6b6663 496.3px,#68625e 627.5px,#67625d 780.6px);"></div><div style="left:480px;top:0;width:12px;height:845px;background:linear-gradient(to bottom,#63769e -90.9px,#64779f -18.6px,#65789f 75.4px,#697ca2 170.4px,#6c80a7 217.3px,#7688ae 264.3px,#8193b8 295.6px,#8b9fc3 326.9px,#9aaccc 358.3px,#aec1da 383.3px,#c4d6e4 402.1px,#d3e5ec 414.4px,#daedf1 423.1px,#cfdfe3 430.7px,#c0cfd2 435px,#b0bcbd 438.3px,#9a9fa2 441px,#84868a 443.2px,#6d6969 445.4px,#6b6663 495.9px,#68625e 626.3px,#67625d 778.4px);"></div><div style="left:492px;top:0;width:12px;height:845px;background:linear-gradient(to bottom,#63769e -87.8px,#64779f -16px,#65789f 77.4px,#697ca2 171.8px,#6c80a7 218.5px,#7688ae 265.3px,#8193b8 296.4px,#8b9fc3 327.5px,#9aaccc 358.7px,#aec1da 383.5px,#c4d6e4 402.2px,#d3e5ec 414.4px,#daedf1 423.1px,#cfdfe3 430.6px,#c0cfd2 435px,#b0bcbd 438.2px,#9a9fa2 440.9px,#84868a 443.1px,#6d6969 445.2px,#6b6663 495.5px,#68625e 625.1px,#67625d 776.3px);"></div><div style="left:504px;top:0;width:12px;height:845px;background:linear-gradient(to bottom,#63769e -84.9px,#64779f -13.5px,#65789f 79.4px,#697ca2 173.3px,#6c80a7 219.7px,#7688ae 266.2px,#8193b8 297.1px,#8b9fc3 328px,#9aaccc 359.1px,#aec1da 383.8px,#c4d6e4 402.3px,#d3e5ec 414.5px,#daedf1 423.1px,#cfdfe3 430.6px,#c0cfd2 434.9px,#b0bcbd 438.1px,#9a9fa2 440.8px,#84868a 442.9px,#6d6969 445.1px,#6b6663 495px,#68625e 623.9px,#67625d 774.3px);"></div><div style="left:516px;top:0;width:12px;height:845px;background:linear-gradient(to bottom,#63769e -82.1px,#64779f -11.1px,#65789f 81.3px,#697ca2 174.7px,#6c80a7 220.8px,#7688ae 267px,#8193b8 297.8px,#8b9fc3 328.5px,#9aaccc 359.4px,#aec1da 384px,#c4d6e4 402.5px,#d3e5ec 414.5px,#daedf1 423.1px,#cfdfe3 430.5px,#c0cfd2 434.8px,#b0bcbd 438px,#9a9fa2 440.7px,#84868a 442.8px,#6d6969 445px,#6b6663 494.6px,#68625e 622.8px,#67625d 772.3px);"></div><div style="left:528px;top:0;width:12px;height:845px;background:linear-gradient(to bottom,#63769e -79.4px,#64779f -8.7px,#65789f 83.1px,#697ca2 176px,#6c80a7 221.9px,#7688ae 267.9px,#8193b8 298.5px,#8b9fc3 329.1px,#9aaccc 359.8px,#aec1da 384.2px,#c4d6e4 402.6px,#d3e5ec 414.6px,#daedf1 423.1px,#cfdfe3 430.5px,#c0cfd2 434.7px,#b0bcbd 437.9px,#9a9fa2 440.6px,#84868a 442.7px,#6d6969 444.8px,#6b6663 494.2px,#68625e 621.7px,#67625d 770.4px);"></div><div style="left:540px;top:0;width:12px;height:845px;background:linear-gradient(to bottom,#63769e -76.8px,#64779f -6.5px,#65789f 84.9px,#697ca2 177.3px,#6c80a7 222.9px,#7688ae 268.7px,#8193b8 299.1px,#8b9fc3 329.5px,#9aaccc 360.1px,#aec1da 384.4px,#c4d6e4 402.7px,#d3e5ec 414.6px,#daedf1 423.1px,#cfdfe3 430.5px,#c0cfd2 434.7px,#b0bcbd 437.9px,#9a9fa2 440.5px,#84868a 442.6px,#6d6969 444.7px,#6b6663 493.9px,#68625e 620.7px,#67625d 768.6px);"></div><div style="left:552px;top:0;width:12px;height:845px;background:linear-gradient(to bottom,#63769e -74.3px,#64779f -4.4px,#65789f 86.6px,#697ca2 178.5px,#6c80a7 223.9px,#7688ae 269.4px,#8193b8 299.7px,#8b9fc3 330px,#9aaccc 360.4px,#aec1da 384.6px,#c4d6e4 402.8px,#d3e5ec 414.6px,#daedf1 423.1px,#cfdfe3 430.4px,#c0cfd2 434.6px,#b0bcbd 437.8px,#9a9fa2 440.4px,#84868a 442.5px,#6d6969 444.6px,#6b6663 493.5px,#68625e 619.7px,#67625d 766.9px);"></div><div style="left:564px;top:0;width:12px;height:845px;background:linear-gradient(to bottom,#63769e -71.9px,#64779f -2.3px,#65789f 88.2px,#697ca2 179.6px,#6c80a7 224.8px,#7688ae 270.2px,#8193b8 300.3px,#8b9fc3 330.4px,#9aaccc 360.7px,#aec1da 384.7px,#c4d6e4 402.8px,#d3e5ec 414.7px,#daedf1 423px,#cfdfe3 430.4px,#c0cfd2 434.6px,#b0bcbd 437.7px,#9a9fa2 440.3px,#84868a 442.4px,#6d6969 444.5px,#6b6663 493.2px,#68625e 618.7px,#67625d 765.2px);"></div><div style="left:576px;top:0;width:12px;height:845px;background:linear-gradient(to bottom,#63769e -69.7px,#64779f -0.4px,#65789f 89.7px,#697ca2 180.8px,#6c80a7 225.8px,#7688ae 270.9px,#8193b8 300.9px,#8b9fc3 330.9px,#9aaccc 361px,#aec1da 384.9px,#c4d6e4 402.9px,#d3e5ec 414.7px,#daedf1 423px,#cfdfe3 430.3px,#c0cfd2 434.5px,#b0bcbd 437.6px,#9a9fa2 440.2px,#84868a 442.3px,#6d6969 444.4px,#6b6663 492.8px,#68625e 617.8px,#67625d 763.7px);"></div><div style="left:588px;top:0;width:12px;height:845px;background:linear-gradient(to bottom,#63769e -67.5px,#64779f 1.4px,#65789f 91.2px,#697ca2 181.8px,#6c80a7 226.6px,#7688ae 271.5px,#8193b8 301.4px,#8b9fc3 331.3px,#9aaccc 361.2px,#aec1da 385.1px,#c4d6e4 403px,#d3e5ec 414.7px,#daedf1 423px,#cfdfe3 430.3px,#c0cfd2 434.4px,#b0bcbd 437.6px,#9a9fa2 440.1px,#84868a 442.2px,#6d6969 444.3px,#6b6663 492.5px,#68625e 617px,#67625d 762.2px);"></div><div style="left:600px;top:0;width:12px;height:845px;background:linear-gradient(to bottom,#63769e -65.5px,#64779f 3.2px,#65789f 92.5px,#697ca2 182.8px,#6c80a7 227.4px,#7688ae 272.1px,#8193b8 301.9px,#8b9fc3 331.6px,#9aaccc 361.5px,#aec1da 385.2px,#c4d6e4 403.1px,#d3e5ec 414.8px,#daedf1 423px,#cfdfe3 430.3px,#c0cfd2 434.4px,#b0bcbd 437.5px,#9a9fa2 440.1px,#84868a 442.1px,#6d6969 444.2px,#6b6663 492.2px,#68625e 616.2px,#67625d 760.8px);"></div><div style="left:612px;top:0;width:12px;height:845px;background:linear-gradient(to bottom,#63769e -63.6px,#64779f 4.8px,#65789f 93.8px,#697ca2 183.7px,#6c80a7 228.2px,#7688ae 272.7px,#8193b8 302.4px,#8b9fc3 332px,#9aaccc 361.7px,#aec1da 385.4px,#c4d6e4 403.2px,#d3e5ec 414.8px,#daedf1 423px,#cfdfe3 430.2px,#c0cfd2 434.3px,#b0bcbd 437.4px,#9a9fa2 440px,#84868a 442.1px,#6d6969 444.1px,#6b6663 492px,#68625e 615.4px,#67625d 759.4px);"></div><div style="left:624px;top:0;width:12px;height:845px;background:linear-gradient(to bottom,#63769e -61.8px,#64779f 6.4px,#65789f 95px,#697ca2 184.6px,#6c80a7 228.9px,#7688ae 273.3px,#8193b8 302.8px,#8b9fc3 332.3px,#9aaccc 361.9px,#aec1da 385.5px,#c4d6e4 403.2px,#d3e5ec 414.8px,#daedf1 423px,#cfdfe3 430.2px,#c0cfd2 434.3px,#b0bcbd 437.4px,#9a9fa2 439.9px,#84868a 442px,#6d6969 444px,#6b6663 491.7px,#68625e 614.7px,#67625d 758.2px);"></div><div style="left:636px;top:0;width:12px;height:845px;background:linear-gradient(to bottom,#63769e -60.1px,#64779f 7.8px,#65789f 96.2px,#697ca2 185.4px,#6c80a7 229.6px,#7688ae 273.8px,#8193b8 303.2px,#8b9fc3 332.6px,#9aaccc 362.1px,#aec1da 385.6px,#c4d6e4 403.3px,#d3e5ec 414.8px,#daedf1 423px,#cfdfe3 430.2px,#c0cfd2 434.3px,#b0bcbd 437.3px,#9a9fa2 439.9px,#84868a 441.9px,#6d6969 444px,#6b6663 491.5px,#68625e 614px,#67625d 757px);"></div><div style="left:648px;top:0;width:12px;height:845px;background:linear-gradient(to bottom,#63769e -58.6px,#64779f 9.1px,#65789f 97.2px,#697ca2 186.2px,#6c80a7 230.2px,#7688ae 274.3px,#8193b8 303.6px,#8b9fc3 332.9px,#9aaccc 362.3px,#aec1da 385.8px,#c4d6e4 403.4px,#d3e5ec 414.9px,#daedf1 423px,#cfdfe3 430.1px,#c0cfd2 434.2px,#b0bcbd 437.3px,#9a9fa2 439.8px,#84868a 441.9px,#6d6969 443.9px,#6b6663 491.2px,#68625e 613.4px,#67625d 756px);"></div><div style="left:660px;top:0;width:12px;height:845px;background:linear-gradient(to bottom,#63769e -57.2px,#64779f 10.3px,#65789f 98.2px,#697ca2 186.9px,#6c80a7 230.7px,#7688ae 274.7px,#8193b8 303.9px,#8b9fc3 333.2px,#9aaccc 362.5px,#aec1da 385.9px,#c4d6e4 403.4px,#d3e5ec 414.9px,#daedf1 423px,#cfdfe3 430.1px,#c0cfd2 434.2px,#b0bcbd 437.2px,#9a9fa2 439.8px,#84868a 441.8px,#6d6969 443.8px,#6b6663 491px,#68625e 612.9px,#67625d 755px);"></div><div style="left:672px;top:0;width:12px;height:845px;background:linear-gradient(to bottom,#63769e -55.9px,#64779f 11.4px,#65789f 99px,#697ca2 187.5px,#6c80a7 231.3px,#7688ae 275.1px,#8193b8 304.3px,#8b9fc3 333.4px,#9aaccc 362.7px,#aec1da 386px,#c4d6e4 403.5px,#d3e5ec 414.9px,#daedf1 423px,#cfdfe3 430.1px,#c0cfd2 434.1px,#b0bcbd 437.2px,#9a9fa2 439.7px,#84868a 441.7px,#6d6969 443.8px,#6b6663 490.8px,#68625e 612.3px,#67625d 754.1px);"></div><div style="left:684px;top:0;width:12px;height:845px;background:linear-gradient(to bottom,#63769e -54.7px,#64779f 12.5px,#65789f 99.8px,#697ca2 188.1px,#6c80a7 231.7px,#7688ae 275.5px,#8193b8 304.5px,#8b9fc3 333.6px,#9aaccc 362.8px,#aec1da 386px,#c4d6e4 403.5px,#d3e5ec 414.9px,#daedf1 423px,#cfdfe3 430.1px,#c0cfd2 434.1px,#b0bcbd 437.1px,#9a9fa2 439.7px,#84868a 441.7px,#6d6969 443.7px,#6b6663 490.7px,#68625e 611.9px,#67625d 753.3px);"></div><div style="left:696px;top:0;width:12px;height:845px;background:linear-gradient(to bottom,#63769e -53.7px,#64779f 13.3px,#65789f 100.5px,#697ca2 188.6px,#6c80a7 232.1px,#7688ae 275.8px,#8193b8 304.8px,#8b9fc3 333.8px,#9aaccc 362.9px,#aec1da 386.1px,#c4d6e4 403.6px,#d3e5ec 414.9px,#daedf1 423px,#cfdfe3 430.1px,#c0cfd2 434.1px,#b0bcbd 437.1px,#9a9fa2 439.6px,#84868a 441.7px,#6d6969 443.7px,#6b6663 490.5px,#68625e 611.5px,#67625d 752.6px);"></div><div style="left:708px;top:0;width:12px;height:845px;background:linear-gradient(to bottom,#63769e -52.8px,#64779f 14.1px,#65789f 101.1px,#697ca2 189px,#6c80a7 232.5px,#7688ae 276.1px,#8193b8 305px,#8b9fc3 334px,#9aaccc 363.1px,#aec1da 386.2px,#c4d6e4 403.6px,#d3e5ec 415px,#daedf1 423px,#cfdfe3 430px,#c0cfd2 434.1px,#b0bcbd 437.1px,#9a9fa2 439.6px,#84868a 441.6px,#6d6969 443.6px,#6b6663 490.4px,#68625e 611.1px,#67625d 751.9px);"></div><div style="left:720px;top:0;width:12px;height:845px;background:linear-gradient(to bottom,#63769e -52px,#64779f 14.8px,#65789f 101.7px,#697ca2 189.4px,#6c80a7 232.8px,#7688ae 276.3px,#8193b8 305.2px,#8b9fc3 334.1px,#9aaccc 363.2px,#aec1da 386.3px,#c4d6e4 403.6px,#d3e5ec 415px,#daedf1 423px,#cfdfe3 430px,#c0cfd2 434.1px,#b0bcbd 437.1px,#9a9fa2 439.6px,#84868a 441.6px,#6d6969 443.6px,#6b6663 490.3px,#68625e 610.8px,#67625d 751.4px);"></div><div style="left:732px;top:0;width:12px;height:845px;background:linear-gradient(to bottom,#63769e -51.3px,#64779f 15.4px,#65789f 102.1px,#697ca2 189.7px,#6c80a7 233.1px,#7688ae 276.5px,#8193b8 305.4px,#8b9fc3 334.3px,#9aaccc 363.2px,#aec1da 386.3px,#c4d6e4 403.6px,#d3e5ec 415px,#daedf1 423px,#cfdfe3 430px,#c0cfd2 434px,#b0bcbd 437px,#9a9fa2 439.5px,#84868a 441.6px,#6d6969 443.6px,#6b6663 490.2px,#68625e 610.5px,#67625d 750.9px);"></div><div style="left:744px;top:0;width:12px;height:845px;background:linear-gradient(to bottom,#63769e -50.8px,#64779f 15.8px,#65789f 102.5px,#697ca2 190px,#6c80a7 233.3px,#7688ae 276.7px,#8193b8 305.5px,#8b9fc3 334.4px,#9aaccc 363.3px,#aec1da 386.3px,#c4d6e4 403.7px,#d3e5ec 415px,#daedf1 423px,#cfdfe3 430px,#c0cfd2 434px,#b0bcbd 437px,#9a9fa2 439.5px,#84868a 441.5px,#6d6969 443.5px,#6b6663 490.1px,#68625e 610.3px,#67625d 750.6px);"></div><div style="left:756px;top:0;width:12px;height:845px;background:linear-gradient(to bottom,#63769e -50.4px,#64779f 16.1px,#65789f 102.7px,#697ca2 190.2px,#6c80a7 233.4px,#7688ae 276.8px,#8193b8 305.6px,#8b9fc3 334.4px,#9aaccc 363.3px,#aec1da 386.4px,#c4d6e4 403.7px,#d3e5ec 415px,#daedf1 423px,#cfdfe3 430px,#c0cfd2 434px,#b0bcbd 437px,#9a9fa2 439.5px,#84868a 441.5px,#6d6969 443.5px,#6b6663 490.1px,#68625e 610.2px,#67625d 750.3px);"></div><div style="left:768px;top:0;width:12px;height:845px;background:linear-gradient(to bottom,#63769e -50.1px,#64779f 16.4px,#65789f 102.9px,#697ca2 190.3px,#6c80a7 233.5px,#7688ae 276.9px,#8193b8 305.7px,#8b9fc3 334.5px,#9aaccc 363.4px,#aec1da 386.4px,#c4d6e4 403.7px,#d3e5ec 415px,#daedf1 423px,#cfdfe3 430px,#c0cfd2 434px,#b0bcbd 437px,#9a9fa2 439.5px,#84868a 441.5px,#6d6969 443.5px,#6b6663 490px,#68625e 610.1px,#67625d 750.1px);"></div><div style="left:780px;top:0;width:12px;height:845px;background:linear-gradient(to bottom,#63769e -50px,#64779f 16.5px,#65789f 103px,#697ca2 190.4px,#6c80a7 233.6px,#7688ae 276.9px,#8193b8 305.7px,#8b9fc3 334.5px,#9aaccc 363.4px,#aec1da 386.4px,#c4d6e4 403.7px,#d3e5ec 415px,#daedf1 423px,#cfdfe3 430px,#c0cfd2 434px,#b0bcbd 437px,#9a9fa2 439.5px,#84868a 441.5px,#6d6969 443.5px,#6b6663 490px,#68625e 610px,#67625d 750px);"></div><div style="left:792px;top:0;width:12px;height:845px;background:linear-gradient(to bottom,#63769e -50px,#64779f 16.5px,#65789f 103px,#697ca2 190.4px,#6c80a7 233.6px,#7688ae 276.9px,#8193b8 305.7px,#8b9fc3 334.5px,#9aaccc 363.4px,#aec1da 386.4px,#c4d6e4 403.7px,#d3e5ec 415px,#daedf1 423px,#cfdfe3 430px,#c0cfd2 434px,#b0bcbd 437px,#9a9fa2 439.5px,#84868a 441.5px,#6d6969 443.5px,#6b6663 490px,#68625e 610px,#67625d 750px);"></div><div style="left:804px;top:0;width:12px;height:845px;background:linear-gradient(to bottom,#63769e -50.1px,#64779f 16.4px,#65789f 102.9px,#697ca2 190.3px,#6c80a7 233.5px,#7688ae 276.9px,#8193b8 305.7px,#8b9fc3 334.5px,#9aaccc 363.4px,#aec1da 386.4px,#c4d6e4 403.7px,#d3e5ec 415px,#daedf1 423px,#cfdfe3 430px,#c0cfd2 434px,#b0bcbd 437px,#9a9fa2 439.5px,#84868a 441.5px,#6d6969 443.5px,#6b6663 490px,#68625e 610.1px,#67625d 750.1px);"></div><div style="left:816px;top:0;width:12px;height:845px;background:linear-gradient(to bottom,#63769e -50.4px,#64779f 16.1px,#65789f 102.7px,#697ca2 190.2px,#6c80a7 233.4px,#7688ae 276.8px,#8193b8 305.6px,#8b9fc3 334.4px,#9aaccc 363.3px,#aec1da 386.4px,#c4d6e4 403.7px,#d3e5ec 415px,#daedf1 423px,#cfdfe3 430px,#c0cfd2 434px,#b0bcbd 437px,#9a9fa2 439.5px,#84868a 441.5px,#6d6969 443.5px,#6b6663 490.1px,#68625e 610.2px,#67625d 750.3px);"></div><div style="left:828px;top:0;width:12px;height:845px;background:linear-gradient(to bottom,#63769e -50.8px,#64779f 15.8px,#65789f 102.5px,#697ca2 190px,#6c80a7 233.3px,#7688ae 276.7px,#8193b8 305.5px,#8b9fc3 334.4px,#9aaccc 363.3px,#aec1da 386.3px,#c4d6e4 403.7px,#d3e5ec 415px,#daedf1 423px,#cfdfe3 430px,#c0cfd2 434px,#b0bcbd 437px,#9a9fa2 439.5px,#84868a 441.5px,#6d6969 443.5px,#6b6663 490.1px,#68625e 610.3px,#67625d 750.6px);"></div><div style="left:840px;top:0;width:12px;height:845px;background:linear-gradient(to bottom,#63769e -51.3px,#64779f 15.4px,#65789f 102.1px,#697ca2 189.7px,#6c80a7 233.1px,#7688ae 276.5px,#8193b8 305.4px,#8b9fc3 334.3px,#9aaccc 363.2px,#aec1da 386.3px,#c4d6e4 403.6px,#d3e5ec 415px,#daedf1 423px,#cfdfe3 430px,#c0cfd2 434px,#b0bcbd 437px,#9a9fa2 439.5px,#84868a 441.6px,#6d6969 443.6px,#6b6663 490.2px,#68625e 610.5px,#67625d 750.9px);"></div><div style="left:852px;top:0;width:12px;height:845px;background:linear-gradient(to bottom,#63769e -52px,#64779f 14.8px,#65789f 101.7px,#697ca2 189.4px,#6c80a7 232.8px,#7688ae 276.3px,#8193b8 305.2px,#8b9fc3 334.1px,#9aaccc 363.2px,#aec1da 386.3px,#c4d6e4 403.6px,#d3e5ec 415px,#daedf1 423px,#cfdfe3 430px,#c0cfd2 434.1px,#b0bcbd 437.1px,#9a9fa2 439.6px,#84868a 441.6px,#6d6969 443.6px,#6b6663 490.3px,#68625e 610.8px,#67625d 751.4px);"></div><div style="left:864px;top:0;width:12px;height:845px;background:linear-gradient(to bottom,#63769e -52.8px,#64779f 14.1px,#65789f 101.1px,#697ca2 189px,#6c80a7 232.5px,#7688ae 276.1px,#8193b8 305px,#8b9fc3 334px,#9aaccc 363.1px,#aec1da 386.2px,#c4d6e4 403.6px,#d3e5ec 415px,#daedf1 423px,#cfdfe3 430px,#c0cfd2 434.1px,#b0bcbd 437.1px,#9a9fa2 439.6px,#84868a 441.6px,#6d6969 443.6px,#6b6663 490.4px,#68625e 611.1px,#67625d 751.9px);"></div><div style="left:876px;top:0;width:12px;height:845px;background:linear-gradient(to bottom,#63769e -53.7px,#64779f 13.3px,#65789f 100.5px,#697ca2 188.6px,#6c80a7 232.1px,#7688ae 275.8px,#8193b8 304.8px,#8b9fc3 333.8px,#9aaccc 362.9px,#aec1da 386.1px,#c4d6e4 403.6px,#d3e5ec 414.9px,#daedf1 423px,#cfdfe3 430.1px,#c0cfd2 434.1px,#b0bcbd 437.1px,#9a9fa2 439.6px,#84868a 441.7px,#6d6969 443.7px,#6b6663 490.5px,#68625e 611.5px,#67625d 752.6px);"></div><div style="left:888px;top:0;width:12px;height:845px;background:linear-gradient(to bottom,#63769e -54.7px,#64779f 12.5px,#65789f 99.8px,#697ca2 188.1px,#6c80a7 231.7px,#7688ae 275.5px,#8193b8 304.5px,#8b9fc3 333.6px,#9aaccc 362.8px,#aec1da 386px,#c4d6e4 403.5px,#d3e5ec 414.9px,#daedf1 423px,#cfdfe3 430.1px,#c0cfd2 434.1px,#b0bcbd 437.1px,#9a9fa2 439.7px,#84868a 441.7px,#6d6969 443.7px,#6b6663 490.7px,#68625e 611.9px,#67625d 753.3px);"></div><div style="left:900px;top:0;width:12px;height:845px;background:linear-gradient(to bottom,#63769e -55.9px,#64779f 11.4px,#65789f 99px,#697ca2 187.5px,#6c80a7 231.3px,#7688ae 275.1px,#8193b8 304.3px,#8b9fc3 333.4px,#9aaccc 362.7px,#aec1da 386px,#c4d6e4 403.5px,#d3e5ec 414.9px,#daedf1 423px,#cfdfe3 430.1px,#c0cfd2 434.1px,#b0bcbd 437.2px,#9a9fa2 439.7px,#84868a 441.7px,#6d6969 443.8px,#6b6663 490.8px,#68625e 612.3px,#67625d 754.1px);"></div><div style="left:912px;top:0;width:12px;height:845px;background:linear-gradient(to bottom,#63769e -57.2px,#64779f 10.3px,#65789f 98.2px,#697ca2 186.9px,#6c80a7 230.7px,#7688ae 274.7px,#8193b8 303.9px,#8b9fc3 333.2px,#9aaccc 362.5px,#aec1da 385.9px,#c4d6e4 403.4px,#d3e5ec 414.9px,#daedf1 423px,#cfdfe3 430.1px,#c0cfd2 434.2px,#b0bcbd 437.2px,#9a9fa2 439.8px,#84868a 441.8px,#6d6969 443.8px,#6b6663 491px,#68625e 612.9px,#67625d 755px);"></div><div style="left:924px;top:0;width:12px;height:845px;background:linear-gradient(to bottom,#63769e -58.6px,#64779f 9.1px,#65789f 97.2px,#697ca2 186.2px,#6c80a7 230.2px,#7688ae 274.3px,#8193b8 303.6px,#8b9fc3 332.9px,#9aaccc 362.3px,#aec1da 385.8px,#c4d6e4 403.4px,#d3e5ec 414.9px,#daedf1 423px,#cfdfe3 430.1px,#c0cfd2 434.2px,#b0bcbd 437.3px,#9a9fa2 439.8px,#84868a 441.9px,#6d6969 443.9px,#6b6663 491.2px,#68625e 613.4px,#67625d 756px);"></div><div style="left:936px;top:0;width:12px;height:845px;background:linear-gradient(to bottom,#63769e -60.1px,#64779f 7.8px,#65789f 96.2px,#697ca2 185.4px,#6c80a7 229.6px,#7688ae 273.8px,#8193b8 303.2px,#8b9fc3 332.6px,#9aaccc 362.1px,#aec1da 385.6px,#c4d6e4 403.3px,#d3e5ec 414.8px,#daedf1 423px,#cfdfe3 430.2px,#c0cfd2 434.3px,#b0bcbd 437.3px,#9a9fa2 439.9px,#84868a 441.9px,#6d6969 444px,#6b6663 491.5px,#68625e 614px,#67625d 757px);"></div><div style="left:948px;top:0;width:12px;height:845px;background:linear-gradient(to bottom,#63769e -61.8px,#64779f 6.4px,#65789f 95px,#697ca2 184.6px,#6c80a7 228.9px,#7688ae 273.3px,#8193b8 302.8px,#8b9fc3 332.3px,#9aaccc 361.9px,#aec1da 385.5px,#c4d6e4 403.2px,#d3e5ec 414.8px,#daedf1 423px,#cfdfe3 430.2px,#c0cfd2 434.3px,#b0bcbd 437.4px,#9a9fa2 439.9px,#84868a 442px,#6d6969 444px,#6b6663 491.7px,#68625e 614.7px,#67625d 758.2px);"></div><div style="left:960px;top:0;width:12px;height:845px;background:linear-gradient(to bottom,#63769e -63.6px,#64779f 4.8px,#65789f 93.8px,#697ca2 183.7px,#6c80a7 228.2px,#7688ae 272.7px,#8193b8 302.4px,#8b9fc3 332px,#9aaccc 361.7px,#aec1da 385.4px,#c4d6e4 403.2px,#d3e5ec 414.8px,#daedf1 423px,#cfdfe3 430.2px,#c0cfd2 434.3px,#b0bcbd 437.4px,#9a9fa2 440px,#84868a 442.1px,#6d6969 444.1px,#6b6663 492px,#68625e 615.4px,#67625d 759.4px);"></div><div style="left:972px;top:0;width:12px;height:845px;background:linear-gradient(to bottom,#63769e -65.5px,#64779f 3.2px,#65789f 92.5px,#697ca2 182.8px,#6c80a7 227.4px,#7688ae 272.1px,#8193b8 301.9px,#8b9fc3 331.6px,#9aaccc 361.5px,#aec1da 385.2px,#c4d6e4 403.1px,#d3e5ec 414.8px,#daedf1 423px,#cfdfe3 430.3px,#c0cfd2 434.4px,#b0bcbd 437.5px,#9a9fa2 440.1px,#84868a 442.1px,#6d6969 444.2px,#6b6663 492.2px,#68625e 616.2px,#67625d 760.8px);"></div><div style="left:984px;top:0;width:12px;height:845px;background:linear-gradient(to bottom,#63769e -67.5px,#64779f 1.4px,#65789f 91.2px,#697ca2 181.8px,#6c80a7 226.6px,#7688ae 271.5px,#8193b8 301.4px,#8b9fc3 331.3px,#9aaccc 361.2px,#aec1da 385.1px,#c4d6e4 403px,#d3e5ec 414.7px,#daedf1 423px,#cfdfe3 430.3px,#c0cfd2 434.4px,#b0bcbd 437.6px,#9a9fa2 440.1px,#84868a 442.2px,#6d6969 444.3px,#6b6663 492.5px,#68625e 617px,#67625d 762.2px);"></div><div style="left:996px;top:0;width:12px;height:845px;background:linear-gradient(to bottom,#63769e -69.7px,#64779f -0.4px,#65789f 89.7px,#697ca2 180.8px,#6c80a7 225.8px,#7688ae 270.9px,#8193b8 300.9px,#8b9fc3 330.9px,#9aaccc 361px,#aec1da 384.9px,#c4d6e4 402.9px,#d3e5ec 414.7px,#daedf1 423px,#cfdfe3 430.3px,#c0cfd2 434.5px,#b0bcbd 437.6px,#9a9fa2 440.2px,#84868a 442.3px,#6d6969 444.4px,#6b6663 492.8px,#68625e 617.8px,#67625d 763.7px);"></div><div style="left:1008px;top:0;width:12px;height:845px;background:linear-gradient(to bottom,#63769e -71.9px,#64779f -2.3px,#65789f 88.2px,#697ca2 179.6px,#6c80a7 224.8px,#7688ae 270.2px,#8193b8 300.3px,#8b9fc3 330.4px,#9aaccc 360.7px,#aec1da 384.7px,#c4d6e4 402.8px,#d3e5ec 414.7px,#daedf1 423px,#cfdfe3 430.4px,#c0cfd2 434.6px,#b0bcbd 437.7px,#9a9fa2 440.3px,#84868a 442.4px,#6d6969 444.5px,#6b6663 493.2px,#68625e 618.7px,#67625d 765.2px);"></div><div style="left:1020px;top:0;width:12px;height:845px;background:linear-gradient(to bottom,#63769e -74.3px,#64779f -4.4px,#65789f 86.6px,#697ca2 178.5px,#6c80a7 223.9px,#7688ae 269.4px,#8193b8 299.7px,#8b9fc3 330px,#9aaccc 360.4px,#aec1da 384.6px,#c4d6e4 402.8px,#d3e5ec 414.6px,#daedf1 423.1px,#cfdfe3 430.4px,#c0cfd2 434.6px,#b0bcbd 437.8px,#9a9fa2 440.4px,#84868a 442.5px,#6d6969 444.6px,#6b6663 493.5px,#68625e 619.7px,#67625d 766.9px);"></div><div style="left:1032px;top:0;width:12px;height:845px;background:linear-gradient(to bottom,#63769e -76.8px,#64779f -6.5px,#65789f 84.9px,#697ca2 177.3px,#6c80a7 222.9px,#7688ae 268.7px,#8193b8 299.1px,#8b9fc3 329.5px,#9aaccc 360.1px,#aec1da 384.4px,#c4d6e4 402.7px,#d3e5ec 414.6px,#daedf1 423.1px,#cfdfe3 430.5px,#c0cfd2 434.7px,#b0bcbd 437.9px,#9a9fa2 440.5px,#84868a 442.6px,#6d6969 444.7px,#6b6663 493.9px,#68625e 620.7px,#67625d 768.6px);"></div><div style="left:1044px;top:0;width:12px;height:845px;background:linear-gradient(to bottom,#63769e -79.4px,#64779f -8.7px,#65789f 83.1px,#697ca2 176px,#6c80a7 221.9px,#7688ae 267.9px,#8193b8 298.5px,#8b9fc3 329.1px,#9aaccc 359.8px,#aec1da 384.2px,#c4d6e4 402.6px,#d3e5ec 414.6px,#daedf1 423.1px,#cfdfe3 430.5px,#c0cfd2 434.7px,#b0bcbd 437.9px,#9a9fa2 440.6px,#84868a 442.7px,#6d6969 444.8px,#6b6663 494.2px,#68625e 621.7px,#67625d 770.4px);"></div><div style="left:1056px;top:0;width:12px;height:845px;background:linear-gradient(to bottom,#63769e -82.1px,#64779f -11.1px,#65789f 81.3px,#697ca2 174.7px,#6c80a7 220.8px,#7688ae 267px,#8193b8 297.8px,#8b9fc3 328.5px,#9aaccc 359.4px,#aec1da 384px,#c4d6e4 402.5px,#d3e5ec 414.5px,#daedf1 423.1px,#cfdfe3 430.5px,#c0cfd2 434.8px,#b0bcbd 438px,#9a9fa2 440.7px,#84868a 442.8px,#6d6969 445px,#6b6663 494.6px,#68625e 622.8px,#67625d 772.3px);"></div><div style="left:1068px;top:0;width:12px;height:845px;background:linear-gradient(to bottom,#63769e -84.9px,#64779f -13.5px,#65789f 79.4px,#697ca2 173.3px,#6c80a7 219.7px,#7688ae 266.2px,#8193b8 297.1px,#8b9fc3 328px,#9aaccc 359.1px,#aec1da 383.8px,#c4d6e4 402.3px,#d3e5ec 414.5px,#daedf1 423.1px,#cfdfe3 430.6px,#c0cfd2 434.9px,#b0bcbd 438.1px,#9a9fa2 440.8px,#84868a 442.9px,#6d6969 445.1px,#6b6663 495px,#68625e 623.9px,#67625d 774.3px);"></div><div style="left:1080px;top:0;width:12px;height:845px;background:linear-gradient(to bottom,#63769e -87.8px,#64779f -16px,#65789f 77.4px,#697ca2 171.8px,#6c80a7 218.5px,#7688ae 265.3px,#8193b8 296.4px,#8b9fc3 327.5px,#9aaccc 358.7px,#aec1da 383.5px,#c4d6e4 402.2px,#d3e5ec 414.4px,#daedf1 423.1px,#cfdfe3 430.6px,#c0cfd2 435px,#b0bcbd 438.2px,#9a9fa2 440.9px,#84868a 443.1px,#6d6969 445.2px,#6b6663 495.5px,#68625e 625.1px,#67625d 776.3px);"></div><div style="left:1092px;top:0;width:12px;height:845px;background:linear-gradient(to bottom,#63769e -90.9px,#64779f -18.6px,#65789f 75.4px,#697ca2 170.4px,#6c80a7 217.3px,#7688ae 264.3px,#8193b8 295.6px,#8b9fc3 326.9px,#9aaccc 358.3px,#aec1da 383.3px,#c4d6e4 402.1px,#d3e5ec 414.4px,#daedf1 423.1px,#cfdfe3 430.7px,#c0cfd2 435px,#b0bcbd 438.3px,#9a9fa2 441px,#84868a 443.2px,#6d6969 445.4px,#6b6663 495.9px,#68625e 626.3px,#67625d 778.4px);"></div><div style="left:1104px;top:0;width:12px;height:845px;background:linear-gradient(to bottom,#63769e -94px,#64779f -21.3px,#65789f 73.3px,#697ca2 168.8px,#6c80a7 216px,#7688ae 263.4px,#8193b8 294.9px,#8b9fc3 326.3px,#9aaccc 357.9px,#aec1da 383.1px,#c4d6e4 402px,#d3e5ec 414.3px,#daedf1 423.1px,#cfdfe3 430.7px,#c0cfd2 435.1px,#b0bcbd 438.4px,#9a9fa2 441.1px,#84868a 443.3px,#6d6969 445.5px,#6b6663 496.3px,#68625e 627.5px,#67625d 780.6px);"></div><div style="left:1116px;top:0;width:12px;height:845px;background:linear-gradient(to bottom,#63769e -97.2px,#64779f -24.1px,#65789f 71.1px,#697ca2 167.2px,#6c80a7 214.8px,#7688ae 262.4px,#8193b8 294.1px,#8b9fc3 325.7px,#9aaccc 357.5px,#aec1da 382.8px,#c4d6e4 401.9px,#d3e5ec 414.3px,#daedf1 423.1px,#cfdfe3 430.8px,#c0cfd2 435.2px,#b0bcbd 438.5px,#9a9fa2 441.3px,#84868a 443.5px,#6d6969 445.7px,#6b6663 496.8px,#68625e 628.8px,#67625d 782.8px);"></div><div style="left:1128px;top:0;width:12px;height:845px;background:linear-gradient(to bottom,#63769e -100.5px,#64779f -26.9px,#65789f 68.8px,#697ca2 165.6px,#6c80a7 213.4px,#7688ae 261.4px,#8193b8 293.2px,#8b9fc3 325.1px,#9aaccc 357.1px,#aec1da 382.6px,#c4d6e4 401.7px,#d3e5ec 414.3px,#daedf1 423.1px,#cfdfe3 430.9px,#c0cfd2 435.3px,#b0bcbd 438.6px,#9a9fa2 441.4px,#84868a 443.6px,#6d6969 445.8px,#6b6663 497.3px,#68625e 630.1px,#67625d 785.1px);"></div><div style="left:1140px;top:0;width:12px;height:845px;background:linear-gradient(to bottom,#63769e -104px,#64779f -29.9px,#65789f 66.5px,#697ca2 163.9px,#6c80a7 212.1px,#7688ae 260.3px,#8193b8 292.4px,#8b9fc3 324.5px,#9aaccc 356.7px,#aec1da 382.3px,#c4d6e4 401.6px,#d3e5ec 414.2px,#daedf1 423.1px,#cfdfe3 430.9px,#c0cfd2 435.4px,#b0bcbd 438.7px,#9a9fa2 441.5px,#84868a 443.7px,#6d6969 446px,#6b6663 497.8px,#68625e 631.5px,#67625d 787.5px);"></div><div style="left:1152px;top:0;width:12px;height:845px;background:linear-gradient(to bottom,#63769e -107.5px,#64779f -32.9px,#65789f 64.2px,#697ca2 162.2px,#6c80a7 210.7px,#7688ae 259.2px,#8193b8 291.5px,#8b9fc3 323.8px,#9aaccc 356.3px,#aec1da 382.1px,#c4d6e4 401.5px,#d3e5ec 414.1px,#daedf1 423.1px,#cfdfe3 431px,#c0cfd2 435.5px,#b0bcbd 438.8px,#9a9fa2 441.6px,#84868a 443.9px,#6d6969 446.1px,#6b6663 498.3px,#68625e 632.9px,#67625d 789.9px);"></div><div style="left:1164px;top:0;width:12px;height:845px;background:linear-gradient(to bottom,#63769e -111.1px,#64779f -36px,#65789f 61.7px,#697ca2 160.4px,#6c80a7 209.2px,#7688ae 258.1px,#8193b8 290.6px,#8b9fc3 323.2px,#9aaccc 355.8px,#aec1da 381.8px,#c4d6e4 401.3px,#d3e5ec 414.1px,#daedf1 423.1px,#cfdfe3 431px,#c0cfd2 435.6px,#b0bcbd 438.9px,#9a9fa2 441.8px,#84868a 444px,#6d6969 446.3px,#6b6663 498.8px,#68625e 634.3px,#67625d 792.5px);"></div><div style="left:1176px;top:0;width:12px;height:845px;background:linear-gradient(to bottom,#63769e -114.8px,#64779f -39.2px,#65789f 59.2px,#697ca2 158.6px,#6c80a7 207.7px,#7688ae 257px,#8193b8 289.7px,#8b9fc3 322.5px,#9aaccc 355.4px,#aec1da 381.5px,#c4d6e4 401.2px,#d3e5ec 414px,#daedf1 423.1px,#cfdfe3 431.1px,#c0cfd2 435.6px,#b0bcbd 439.1px,#9a9fa2 441.9px,#84868a 444.2px,#6d6969 446.5px,#6b6663 499.3px,#68625e 635.8px,#67625d 795px);"></div><div style="left:1188px;top:0;width:12px;height:845px;background:linear-gradient(to bottom,#63769e -118.6px,#64779f -42.4px,#65789f 56.6px,#697ca2 156.7px,#6c80a7 206.2px,#7688ae 255.8px,#8193b8 288.8px,#8b9fc3 321.8px,#9aaccc 354.9px,#aec1da 381.2px,#c4d6e4 401px,#d3e5ec 414px,#daedf1 423.1px,#cfdfe3 431.2px,#c0cfd2 435.7px,#b0bcbd 439.2px,#9a9fa2 442px,#84868a 444.3px,#6d6969 446.6px,#6b6663 499.9px,#68625e 637.3px,#67625d 797.7px);"></div><div style="left:1200px;top:0;width:12px;height:845px;background:linear-gradient(to bottom,#63769e -122.5px,#64779f -45.8px,#65789f 54px,#697ca2 154.8px,#6c80a7 204.7px,#7688ae 254.6px,#8193b8 287.8px,#8b9fc3 321.1px,#9aaccc 354.4px,#aec1da 380.9px,#c4d6e4 400.9px,#d3e5ec 413.9px,#daedf1 423.2px,#cfdfe3 431.2px,#c0cfd2 435.8px,#b0bcbd 439.3px,#9a9fa2 442.2px,#84868a 444.5px,#6d6969 446.8px,#6b6663 500.4px,#68625e 638.9px,#67625d 800.4px);"></div><div style="left:1212px;top:0;width:12px;height:845px;background:linear-gradient(to bottom,#63769e -126.4px,#64779f -49.2px,#65789f 51.3px,#697ca2 152.9px,#6c80a7 203.1px,#7688ae 253.4px,#8193b8 286.9px,#8b9fc3 320.3px,#9aaccc 353.9px,#aec1da 380.6px,#c4d6e4 400.7px,#d3e5ec 413.9px,#daedf1 423.2px,#cfdfe3 431.3px,#c0cfd2 435.9px,#b0bcbd 439.4px,#9a9fa2 442.3px,#84868a 444.7px,#6d6969 447px,#6b6663 501px,#68625e 640.4px,#67625d 803.1px);"></div><div style="left:1224px;top:0;width:12px;height:845px;background:linear-gradient(to bottom,#63769e -130.5px,#64779f -52.6px,#65789f 48.6px,#697ca2 150.9px,#6c80a7 201.5px,#7688ae 252.2px,#8193b8 285.9px,#8b9fc3 319.6px,#9aaccc 353.4px,#aec1da 380.3px,#c4d6e4 400.6px,#d3e5ec 413.8px,#daedf1 423.2px,#cfdfe3 431.4px,#c0cfd2 436px,#b0bcbd 439.6px,#9a9fa2 442.5px,#84868a 444.8px,#6d6969 447.2px,#6b6663 501.6px,#68625e 642.1px,#67625d 805.9px);"></div><div style="left:1236px;top:0;width:12px;height:845px;background:linear-gradient(to bottom,#63769e -134.6px,#64779f -56.2px,#65789f 45.8px,#697ca2 148.9px,#6c80a7 199.8px,#7688ae 250.9px,#8193b8 284.9px,#8b9fc3 318.8px,#9aaccc 352.9px,#aec1da 380px,#c4d6e4 400.4px,#d3e5ec 413.7px,#daedf1 423.2px,#cfdfe3 431.4px,#c0cfd2 436.2px,#b0bcbd 439.7px,#9a9fa2 442.6px,#84868a 445px,#6d6969 447.4px,#6b6663 502.2px,#68625e 643.7px,#67625d 808.8px);"></div><div style="left:1248px;top:0;width:12px;height:845px;background:linear-gradient(to bottom,#63769e -138.8px,#64779f -59.8px,#65789f 43px,#697ca2 146.8px,#6c80a7 198.1px,#7688ae 249.6px,#8193b8 283.8px,#8b9fc3 318px,#9aaccc 352.4px,#aec1da 379.7px,#c4d6e4 400.3px,#d3e5ec 413.7px,#daedf1 423.2px,#cfdfe3 431.5px,#c0cfd2 436.3px,#b0bcbd 439.8px,#9a9fa2 442.8px,#84868a 445.2px,#6d6969 447.5px,#6b6663 502.8px,#68625e 645.4px,#67625d 811.7px);"></div><div style="left:1260px;top:0;width:12px;height:845px;background:linear-gradient(to bottom,#63769e -143.1px,#64779f -63.5px,#65789f 40.1px,#697ca2 144.7px,#6c80a7 196.4px,#7688ae 248.3px,#8193b8 282.8px,#8b9fc3 317.2px,#9aaccc 351.8px,#aec1da 379.4px,#c4d6e4 400.1px,#d3e5ec 413.6px,#daedf1 423.2px,#cfdfe3 431.6px,#c0cfd2 436.4px,#b0bcbd 440px,#9a9fa2 443px,#84868a 445.3px,#6d6969 447.7px,#6b6663 503.4px,#68625e 647.1px,#67625d 814.7px);"></div><div style="left:1272px;top:0;width:12px;height:845px;background:linear-gradient(to bottom,#63769e -147.5px,#64779f -67.2px,#65789f 37.1px,#697ca2 142.6px,#6c80a7 194.7px,#7688ae 246.9px,#8193b8 281.7px,#8b9fc3 316.4px,#9aaccc 351.3px,#aec1da 379px,#c4d6e4 399.9px,#d3e5ec 413.6px,#daedf1 423.2px,#cfdfe3 431.7px,#c0cfd2 436.5px,#b0bcbd 440.1px,#9a9fa2 443.1px,#84868a 445.5px,#6d6969 447.9px,#6b6663 504px,#68625e 648.8px,#67625d 817.7px);"></div><div style="left:1284px;top:0;width:12px;height:845px;background:linear-gradient(to bottom,#63769e -151.9px,#64779f -71px,#65789f 34.1px,#697ca2 140.4px,#6c80a7 192.9px,#7688ae 245.6px,#8193b8 280.6px,#8b9fc3 315.6px,#9aaccc 350.7px,#aec1da 378.7px,#c4d6e4 399.7px,#d3e5ec 413.5px,#daedf1 423.2px,#cfdfe3 431.7px,#c0cfd2 436.6px,#b0bcbd 440.2px,#9a9fa2 443.3px,#84868a 445.7px,#6d6969 448.1px,#6b6663 504.7px,#68625e 650.6px,#67625d 820.8px);"></div><div style="left:1296px;top:0;width:12px;height:845px;background:linear-gradient(to bottom,#63769e -156.4px,#64779f -74.9px,#65789f 31.1px,#697ca2 138.2px,#6c80a7 191.1px,#7688ae 244.2px,#8193b8 279.5px,#8b9fc3 314.8px,#9aaccc 350.2px,#aec1da 378.4px,#c4d6e4 399.6px,#d3e5ec 413.4px,#daedf1 423.2px,#cfdfe3 431.8px,#c0cfd2 436.7px,#b0bcbd 440.4px,#9a9fa2 443.4px,#84868a 445.9px,#6d6969 448.3px,#6b6663 505.3px,#68625e 652.4px,#67625d 823.9px);"></div><div style="left:1308px;top:0;width:12px;height:845px;background:linear-gradient(to bottom,#63769e -161px,#64779f -78.9px,#65789f 28px,#697ca2 135.9px,#6c80a7 189.3px,#7688ae 242.8px,#8193b8 278.4px,#8b9fc3 313.9px,#9aaccc 349.6px,#aec1da 378px,#c4d6e4 399.4px,#d3e5ec 413.4px,#daedf1 423.2px,#cfdfe3 431.9px,#c0cfd2 436.8px,#b0bcbd 440.5px,#9a9fa2 443.6px,#84868a 446.1px,#6d6969 448.6px,#6b6663 506px,#68625e 654.2px,#67625d 827.1px);"></div><div style="left:1320px;top:0;width:12px;height:845px;background:linear-gradient(to bottom,#63769e -165.6px,#64779f -82.9px,#65789f 24.8px,#697ca2 133.7px,#6c80a7 187.4px,#7688ae 241.3px,#8193b8 277.2px,#8b9fc3 313.1px,#9aaccc 349px,#aec1da 377.7px,#c4d6e4 399.2px,#d3e5ec 413.3px,#daedf1 423.2px,#cfdfe3 432px,#c0cfd2 436.9px,#b0bcbd 440.7px,#9a9fa2 443.8px,#84868a 446.3px,#6d6969 448.8px,#6b6663 506.7px,#68625e 656.1px,#67625d 830.4px);"></div><div style="left:1332px;top:0;width:12px;height:845px;background:linear-gradient(to bottom,#63769e -170.4px,#64779f -86.9px,#65789f 21.6px,#697ca2 131.3px,#6c80a7 185.6px,#7688ae 239.9px,#8193b8 276px,#8b9fc3 312.2px,#9aaccc 348.5px,#aec1da 377.3px,#c4d6e4 399px,#d3e5ec 413.2px,#daedf1 423.3px,#cfdfe3 432px,#c0cfd2 437.1px,#b0bcbd 440.8px,#9a9fa2 444px,#84868a 446.5px,#6d6969 449px,#6b6663 507.3px,#68625e 657.9px,#67625d 833.6px);"></div><div style="left:1344px;top:0;width:12px;height:845px;background:linear-gradient(to bottom,#63769e -175.2px,#64779f -91px,#65789f 18.4px,#697ca2 129px,#6c80a7 183.6px,#7688ae 238.4px,#8193b8 274.9px,#8b9fc3 311.3px,#9aaccc 347.9px,#aec1da 377px,#c4d6e4 398.8px,#d3e5ec 413.1px,#daedf1 423.3px,#cfdfe3 432.1px,#c0cfd2 437.2px,#b0bcbd 441px,#9a9fa2 444.1px,#84868a 446.7px,#6d6969 449.2px,#6b6663 508px,#68625e 659.8px,#67625d 837px);"></div><div style="left:1356px;top:0;width:12px;height:845px;background:linear-gradient(to bottom,#63769e -180px,#64779f -95.2px,#65789f 15.1px,#697ca2 126.6px,#6c80a7 181.7px,#7688ae 236.9px,#8193b8 273.7px,#8b9fc3 310.4px,#9aaccc 347.3px,#aec1da 376.6px,#c4d6e4 398.7px,#d3e5ec 413.1px,#daedf1 423.3px,#cfdfe3 432.2px,#c0cfd2 437.3px,#b0bcbd 441.1px,#9a9fa2 444.3px,#84868a 446.9px,#6d6969 449.4px,#6b6663 508.7px,#68625e 661.8px,#67625d 840.3px);"></div><div style="left:1368px;top:0;width:12px;height:845px;background:linear-gradient(to bottom,#63769e -184.9px,#64779f -99.4px,#65789f 11.8px,#697ca2 124.2px,#6c80a7 179.7px,#7688ae 235.4px,#8193b8 272.5px,#8b9fc3 309.5px,#9aaccc 346.6px,#aec1da 376.2px,#c4d6e4 398.5px,#d3e5ec 413px,#daedf1 423.3px,#cfdfe3 432.3px,#c0cfd2 437.4px,#b0bcbd 441.3px,#9a9fa2 444.5px,#84868a 447.1px,#6d6969 449.6px,#6b6663 509.4px,#68625e 663.7px,#67625d 843.8px);"></div><div style="left:1380px;top:0;width:12px;height:845px;background:linear-gradient(to bottom,#63769e -189.9px,#64779f -103.7px,#65789f 8.5px,#697ca2 121.8px,#6c80a7 177.8px,#7688ae 233.9px,#8193b8 271.2px,#8b9fc3 308.6px,#9aaccc 346px,#aec1da 375.8px,#c4d6e4 398.3px,#d3e5ec 412.9px,#daedf1 423.3px,#cfdfe3 432.4px,#c0cfd2 437.6px,#b0bcbd 441.4px,#9a9fa2 444.7px,#84868a 447.3px,#6d6969 449.9px,#6b6663 510.2px,#68625e 665.7px,#67625d 847.2px);"></div><div style="left:1392px;top:0;width:12px;height:845px;background:linear-gradient(to bottom,#63769e -194.9px,#64779f -108px,#65789f 5px,#697ca2 119.3px,#6c80a7 175.8px,#7688ae 232.3px,#8193b8 270px,#8b9fc3 307.6px,#9aaccc 345.4px,#aec1da 375.5px,#c4d6e4 398.1px,#d3e5ec 412.9px,#daedf1 423.3px,#cfdfe3 432.5px,#c0cfd2 437.7px,#b0bcbd 441.6px,#9a9fa2 444.9px,#84868a 447.5px,#6d6969 450.1px,#6b6663 510.9px,#68625e 667.7px,#67625d 850.7px);"></div><div style="left:1404px;top:0;width:12px;height:845px;background:linear-gradient(to bottom,#64779f -112.4px,#65789f 1.6px,#697ca2 116.8px,#6c80a7 173.7px,#7688ae 230.8px,#8193b8 268.7px,#8b9fc3 306.7px,#9aaccc 344.8px,#aec1da 375.1px,#c4d6e4 397.9px,#d3e5ec 412.8px,#daedf1 423.3px,#cfdfe3 432.5px,#c0cfd2 437.8px,#b0bcbd 441.8px,#9a9fa2 445.1px,#84868a 447.7px,#6d6969 450.3px,#6b6663 511.6px,#68625e 669.8px,#67625d 854.3px);"></div><div style="left:1416px;top:0;width:12px;height:845px;background:linear-gradient(to bottom,#64779f -116.8px,#65789f -1.9px,#697ca2 114.3px,#6c80a7 171.7px,#7688ae 229.2px,#8193b8 267.5px,#8b9fc3 305.7px,#9aaccc 344.1px,#aec1da 374.7px,#c4d6e4 397.7px,#d3e5ec 412.7px,#daedf1 423.3px,#cfdfe3 432.6px,#c0cfd2 437.9px,#b0bcbd 441.9px,#9a9fa2 445.3px,#84868a 447.9px,#6d6969 450.6px,#6b6663 512.4px,#68625e 671.8px,#67625d 857.8px);"></div><div style="left:1428px;top:0;width:12px;height:845px;background:linear-gradient(to bottom,#64779f -121.3px,#65789f -5.4px,#697ca2 111.7px,#6c80a7 169.6px,#7688ae 227.6px,#8193b8 266.2px,#8b9fc3 304.8px,#9aaccc 343.5px,#aec1da 374.3px,#c4d6e4 397.5px,#d3e5ec 412.6px,#daedf1 423.3px,#cfdfe3 432.7px,#c0cfd2 438.1px,#b0bcbd 442.1px,#9a9fa2 445.4px,#84868a 448.1px,#6d6969 450.8px,#6b6663 513.1px,#68625e 673.9px,#67625d 861.5px);"></div><div style="left:1440px;top:0;width:12px;height:845px;background:linear-gradient(to bottom,#64779f -125.8px,#65789f -9px,#697ca2 109.1px,#6c80a7 167.5px,#7688ae 226px,#8193b8 264.9px,#8b9fc3 303.8px,#9aaccc 342.8px,#aec1da 373.9px,#c4d6e4 397.3px,#d3e5ec 412.5px,#daedf1 423.4px,#cfdfe3 432.8px,#c0cfd2 438.2px,#b0bcbd 442.3px,#9a9fa2 445.6px,#84868a 448.3px,#6d6969 451px,#6b6663 513.9px,#68625e 676px,#67625d 865.1px);"></div><div style="left:1452px;top:0;width:12px;height:845px;background:linear-gradient(to bottom,#64779f -130.4px,#65789f -12.5px,#697ca2 106.5px,#6c80a7 165.4px,#7688ae 224.3px,#8193b8 263.6px,#8b9fc3 302.8px,#9aaccc 342.2px,#aec1da 373.5px,#c4d6e4 397.1px,#d3e5ec 412.5px,#daedf1 423.4px,#cfdfe3 432.9px,#c0cfd2 438.3px,#b0bcbd 442.4px,#9a9fa2 445.8px,#84868a 448.6px,#6d6969 451.3px,#6b6663 514.6px,#68625e 678.1px,#67625d 868.8px);"></div><div style="left:1464px;top:0;width:12px;height:845px;background:linear-gradient(to bottom,#64779f -135px,#65789f -16.2px,#697ca2 103.9px,#6c80a7 163.2px,#7688ae 222.7px,#8193b8 262.3px,#8b9fc3 301.8px,#9aaccc 341.5px,#aec1da 373.1px,#c4d6e4 396.9px,#d3e5ec 412.4px,#daedf1 423.4px,#cfdfe3 433px,#c0cfd2 438.5px,#b0bcbd 442.6px,#9a9fa2 446px,#84868a 448.8px,#6d6969 451.5px,#6b6663 515.4px,#68625e 680.2px,#67625d 872.5px);"></div><div style="left:1476px;top:0;width:12px;height:845px;background:linear-gradient(to bottom,#64779f -139.6px,#65789f -19.8px,#697ca2 101.2px,#6c80a7 161.1px,#7688ae 221px,#8193b8 260.9px,#8b9fc3 300.8px,#9aaccc 340.8px,#aec1da 372.7px,#c4d6e4 396.7px,#d3e5ec 412.3px,#daedf1 423.4px,#cfdfe3 433.1px,#c0cfd2 438.6px,#b0bcbd 442.8px,#9a9fa2 446.2px,#84868a 449px,#6d6969 451.8px,#6b6663 516.2px,#68625e 682.4px,#67625d 876.3px);"></div><div style="left:1488px;top:0;width:12px;height:845px;background:linear-gradient(to bottom,#64779f -144.3px,#65789f -23.5px,#697ca2 98.5px,#6c80a7 158.9px,#7688ae 219.3px,#8193b8 259.6px,#8b9fc3 299.8px,#9aaccc 340.2px,#aec1da 372.3px,#c4d6e4 396.4px,#d3e5ec 412.2px,#daedf1 423.4px,#cfdfe3 433.2px,#c0cfd2 438.8px,#b0bcbd 442.9px,#9a9fa2 446.4px,#84868a 449.2px,#6d6969 452px,#6b6663 517px,#68625e 684.6px,#67625d 880.1px);"></div><div style="left:1500px;top:0;width:12px;height:845px;background:linear-gradient(to bottom,#64779f -149.1px,#65789f -27.3px,#697ca2 95.8px,#6c80a7 156.7px,#7688ae 217.7px,#8193b8 258.2px,#8b9fc3 298.8px,#9aaccc 339.5px,#aec1da 371.9px,#c4d6e4 396.2px,#d3e5ec 412.1px,#daedf1 423.4px,#cfdfe3 433.3px,#c0cfd2 438.9px,#b0bcbd 443.1px,#9a9fa2 446.6px,#84868a 449.5px,#6d6969 452.3px,#6b6663 517.8px,#68625e 686.8px,#67625d 883.9px);"></div><div style="left:1512px;top:0;width:12px;height:845px;background:linear-gradient(to bottom,#64779f -153.9px,#65789f -31px,#697ca2 93.1px,#6c80a7 154.4px,#7688ae 215.9px,#8193b8 256.8px,#8b9fc3 297.7px,#9aaccc 338.8px,#aec1da 371.4px,#c4d6e4 396px,#d3e5ec 412.1px,#daedf1 423.4px,#cfdfe3 433.4px,#c0cfd2 439px,#b0bcbd 443.3px,#9a9fa2 446.9px,#84868a 449.7px,#6d6969 452.5px,#6b6663 518.6px,#68625e 689px,#67625d 887.8px);"></div><div style="left:1524px;top:0;width:12px;height:845px;background:linear-gradient(to bottom,#64779f -158.7px,#65789f -34.8px,#697ca2 90.3px,#6c80a7 152.2px,#7688ae 214.2px,#8193b8 255.5px,#8b9fc3 296.7px,#9aaccc 338.1px,#aec1da 371px,#c4d6e4 395.8px,#d3e5ec 412px,#daedf1 423.4px,#cfdfe3 433.5px,#c0cfd2 439.2px,#b0bcbd 443.5px,#9a9fa2 447.1px,#84868a 449.9px,#6d6969 452.8px,#6b6663 519.4px,#68625e 691.2px,#67625d 891.7px);"></div><div style="left:1536px;top:0;width:12px;height:845px;background:linear-gradient(to bottom,#64779f -163.5px,#65789f -38.6px,#697ca2 87.6px,#6c80a7 150px,#7688ae 212.5px,#8193b8 254.1px,#8b9fc3 295.7px,#9aaccc 337.4px,#aec1da 370.6px,#c4d6e4 395.6px,#d3e5ec 411.9px,#daedf1 423.4px,#cfdfe3 433.6px,#c0cfd2 439.3px,#b0bcbd 443.7px,#9a9fa2 447.3px,#84868a 450.2px,#6d6969 453px,#6b6663 520.2px,#68625e 693.5px,#67625d 895.6px);"></div><div style="left:1548px;top:0;width:12px;height:845px;background:linear-gradient(to bottom,#64779f -168.4px,#65789f -42.5px,#697ca2 84.8px,#6c80a7 147.7px,#7688ae 210.7px,#8193b8 252.7px,#8b9fc3 294.6px,#9aaccc 336.7px,#aec1da 370.2px,#c4d6e4 395.4px,#d3e5ec 411.8px,#daedf1 423.5px,#cfdfe3 433.6px,#c0cfd2 439.5px,#b0bcbd 443.8px,#9a9fa2 447.5px,#84868a 450.4px,#6d6969 453.3px,#6b6663 521px,#68625e 695.7px,#67625d 899.6px);"></div><div style="left:1560px;top:0;width:12px;height:845px;background:linear-gradient(to bottom,#64779f -173.4px,#65789f -46.4px,#697ca2 82px,#6c80a7 145.4px,#7688ae 209px,#8193b8 251.2px,#8b9fc3 293.5px,#9aaccc 336px,#aec1da 369.7px,#c4d6e4 395.1px,#d3e5ec 411.7px,#daedf1 423.5px,#cfdfe3 433.7px,#c0cfd2 439.6px,#b0bcbd 444px,#9a9fa2 447.7px,#84868a 450.6px,#6d6969 453.6px,#6b6663 521.8px,#68625e 698px,#67625d 903.6px);"></div><div style="left:1572px;top:0;width:12px;height:845px;background:linear-gradient(to bottom,#64779f -178.3px,#65789f -50.3px,#697ca2 79.1px,#6c80a7 143.1px,#7688ae 207.2px,#8193b8 249.8px,#8b9fc3 292.5px,#9aaccc 335.2px,#aec1da 369.3px,#c4d6e4 394.9px,#d3e5ec 411.6px,#daedf1 423.5px,#cfdfe3 433.8px,#c0cfd2 439.8px,#b0bcbd 444.2px,#9a9fa2 447.9px,#84868a 450.9px,#6d6969 453.8px,#6b6663 522.7px,#68625e 700.3px,#67625d 907.6px);"></div></div>
<div style="left:816px;top:250px;width:1198px;height:646.6px;border:1.3px solid rgba(255,255,255,.78);box-sizing:border-box;"></div>
<div class="t" style="left:844.2px;top:288.68px;font-size:24.6px;color:#131316;letter-spacing:0.61px;">Status: Not Connected</div>
<div class="t" style="left:844.5px;top:387.18px;font-size:24.6px;color:#131316;letter-spacing:0.64px;">Connected Address:</div>
<div class="t" style="left:843.8px;top:472.98px;font-size:24.6px;color:#131316;letter-spacing:0.63px;">KAIA Balance :-</div>
<div class="t" style="left:843.8px;top:543.18px;font-size:24.6px;color:#131316;letter-spacing:0.64px;">USDT Balance :-</div>
<div class="t" style="left:1297.6px;top:648.98px;font-size:24.6px;color:#131316;letter-spacing:0.7px;">Claim Soul Bound NFT:</div>
<div class="t" style="left:1297.6px;top:817.98px;font-size:24.6px;color:#131316;letter-spacing:0.81px;">Balance:</div>
<div style="left:1837.2px;top:280.6px;width:146.8px;height:41.6px;background:#f5f5f5;border-radius:5px;box-shadow:0 0 0 .8px rgba(40,40,45,.7);background:linear-gradient(to bottom,#fff 0,#fff 1.5px,#f5f5f5 3px);"></div>
<div class="t" style="left:1849.2px;top:293.06px;font-size:18.6px;color:#444;letter-spacing:-0.07px;">Connect Wallet</div>
<div style="left:1829.6px;top:342.7px;width:162.4px;height:41.4px;background:#f5f5f5;border-radius:5px;box-shadow:0 0 0 .8px rgba(40,40,45,.7);background:linear-gradient(to bottom,#fff 0,#fff 1.5px,#f5f5f5 3px);"></div>
<div class="t" style="left:1838.6px;top:355.06px;font-size:18.6px;color:#444;letter-spacing:-0.15px;">Disconnect Wallet</div>
<div style="left:1300.8px;top:724px;width:237.4px;height:41px;background:#f5f5f5;border-radius:5px;box-shadow:0 0 0 .7px rgba(60,58,56,.5);background:linear-gradient(to bottom,#fff 0,#fff 1.5px,#f5f5f5 3px);"></div>
<div class="t" style="left:1387px;top:731.39px;font-size:26px;color:#444;letter-spacing:-0.19px;">Claim</div>
<div style="left:608px;top:150px;width:1584px;height:845px;overflow:hidden;"><div style="left:57px;top:0;width:1px;height:845px;background:rgba(128,128,128,.45);"></div><div style="left:208px;top:0;width:1px;height:845px;background:rgba(128,128,128,.45);"></div><div style="left:359px;top:0;width:1px;height:845px;background:rgba(128,128,128,.45);"></div><div style="left:510px;top:0;width:1px;height:845px;background:rgba(128,128,128,.45);"></div><div style="left:661px;top:0;width:1px;height:845px;background:rgba(128,128,128,.45);"></div><div style="left:813px;top:0;width:1px;height:845px;background:rgba(128,128,128,.45);"></div><div style="left:964px;top:0;width:1px;height:845px;background:rgba(128,128,128,.45);"></div><div style="left:1115px;top:0;width:1px;height:845px;background:rgba(128,128,128,.45);"></div><div style="left:1266px;top:0;width:1px;height:845px;background:rgba(128,128,128,.45);"></div><div style="left:1417px;top:0;width:1px;height:845px;background:rgba(128,128,128,.45);"></div><div style="left:1569px;top:0;width:1px;height:845px;background:rgba(128,128,128,.45);"></div><div style="left:0;top:141px;width:1584px;height:1px;background:rgba(128,128,128,.45);"></div><div style="left:0;top:292px;width:1584px;height:1px;background:rgba(128,128,128,.45);"></div><div style="left:0;top:443px;width:1584px;height:1px;background:rgba(128,128,128,.45);"></div><div style="left:0;top:595px;width:1584px;height:1px;background:rgba(128,128,128,.45);"></div><div style="left:0;top:746px;width:1584px;height:1px;background:rgba(128,128,128,.45);"></div></div>
<div style="left:612px;top:154px;width:76px;height:291px;background:#141920;border-radius:7px;"></div>
<div style="left:634px;top:166px;width:32px;height:2px;background:#6a6a6a;"></div>
<div style="left:634px;top:172px;width:32px;height:2px;background:#6a6a6a;"></div>
<div style="left:618px;top:189px;width:64px;height:40px;background:#4b607d;border-radius:6px 6px 0 0;"></div>
<div style="left:618px;top:231px;width:64px;height:40px;background:#5a5a5a;"></div>
<div style="left:618px;top:273px;width:64px;height:40px;background:#5a5a5a;"></div>
<div style="left:618px;top:315px;width:64px;height:40px;background:#5a5a5a;"></div>
<div style="left:618px;top:357px;width:64px;height:40px;background:#5a5a5a;"></div>
<div style="left:618px;top:399px;width:64px;height:40px;background:#5a5a5a;border-radius:0 0 6px 6px;"></div>
<svg style="left:612px;top:154px;" width="76" height="291" viewBox="0 0 76 291"><g transform="translate(-612,-154)"><g transform="translate(635,192)"><path fill="#c8c8c8" d="M10.700 31.100L1.300 15.600Q0.600 13.200 2.800 13Q4.500 13 5.200 14.500L8.400 19L8.100 4.700Q8.200 3.200 9.700 3.200Q11.100 3.200 11.300 4.700L12.600 12.700L13.600 12.700L14.400 2.400Q14.600 1 16.200 1Q17.700 1 17.800 2.400L18.200 12.700L19.300 12.700L20.400 4.700Q20.700 3.200 22.200 3.300Q23.800 3.500 23.700 5L22.700 15.500L23.500 16L26.300 10.300Q27 9 28.400 9.500Q29.800 10.200 29.300 11.700L25.700 22.300L21.200 31.100Z"/></g><g fill="none" stroke="#c8c8c8" stroke-width="2"><path d="M650.100 247.900V236M650.100 254.500V266.500M646.700 251.200H634.800M653.300 251.200H665.400"/><path d="M645 241L650.100 235.900L655.200 241M645 261.500L650.100 266.600L655.200 261.500M639.900 246.100L634.800 251.200L639.900 256.300M660.300 246.100L665.400 251.200L660.300 256.300"/><path d="M649.90 279.90A13.0 13.0 0 0 0 645.45 305.12"/><path d="M649.90 305.90A13.0 13.0 0 0 0 654.35 280.68"/><path d="M654.5 288V279.700H664M645.400 297.400V306.100H636.200"/><rect x="637.300" y="322.300" width="25.600" height="25.500" rx="1"/><path d="M637.300 340.900H644.900V347.800M648.100 336.800L657.400 327.500M650 327.500H657.400V335.600"/><path d="M644.100 366.100H655.800M644.100 387.900H655.800M639.050 370.800V382.600M661 370.800V382.600"/><path d="M662.46 422.26A13.0 13.0 0 0 1 653.26 431.46"/><path d="M646.54 431.46A13.0 13.0 0 0 1 637.34 422.26"/><path d="M637.34 415.54A13.0 13.0 0 0 1 646.54 406.34"/><path d="M653.26 406.34A13.0 13.0 0 0 1 662.46 415.54"/><path d="M639.200 418.900H660.700M649.900 408.200V429.800M646 412L649.900 408.100L653.800 412M646 426L649.900 429.900L653.800 426M643 415L639.100 418.900L643 422.800M656.800 415L660.700 418.900L656.800 422.800"/></g><g fill="#c8c8c8"><rect x="636.100" y="363.200" width="6" height="5.900"/><rect x="658" y="363.200" width="6" height="5.900"/><rect x="636.100" y="385.100" width="6" height="5.900"/><rect x="658" y="385.100" width="6" height="5.900"/><path d="M660.500 403H666.300V408.700z M633.900 429V434.800H639.700z"/></g></g></svg>
<div style="left:2196px;top:60px;width:683px;height:1686px;background:#383838;border-radius:0 6px 0 0;"></div>
<div style="left:2196px;top:60px;width:683px;height:38px;background:#282828;border-radius:0 8px 0 0;"></div>
<div style="left:2196px;top:60px;width:186px;height:38px;background:#3c3c3c;border-radius:5px 5px 0 0;"></div>
<svg style="left:2213.9px;top:69.9px;" width="20.4" height="20.4" viewBox="0 0 20.4 20.4"><circle cx="10.100" cy="10.100" r="10.100" fill="#c8c8c8"/><rect x="8" y="8.100" width="4.200" height="7.800" fill="#3c3c3c"/><circle cx="10.100" cy="4" r="1.950" fill="#3c3c3c"/></svg>
<div class="t" style="left:2244px;top:68.48px;font-size:24px;color:#c8c8c8;letter-spacing:0.7px;">Inspector</div>
<svg style="left:2809px;top:67px;" width="17" height="21" viewBox="0 0 17 21"><g fill="none" stroke="#d0d0d0"><path stroke-width="2.400" d="M13.300 10.600V5.500A5.100 5.100 0 0 0 3.300 4.300"/><rect x="1.700" y="11.670" width="13.550" height="7.700" rx="0.800" stroke-width="2.200"/></g></svg>
<svg style="left:2848px;top:66px;" width="8" height="24" viewBox="0 0 8 24"><circle cx="4" cy="4.45" r="2.6" fill="#c8c8c8"/><circle cx="4" cy="12" r="2.6" fill="#c8c8c8"/><circle cx="4" cy="19.55" r="2.6" fill="#c8c8c8"/></svg>
<div style="left:0px;top:999px;width:2192px;height:747px;background:#383838;border-radius:0 6px 0 0;"></div>
<div style="left:0px;top:999px;width:2192px;height:38px;background:#282828;border-radius:0 8px 0 0;"></div>
<div style="left:0px;top:999px;width:160px;height:38px;background:#3c3c3c;border-radius:0 4px 0 0;"></div>
<svg style="left:13.8px;top:1009.1px;" width="24.4" height="20" viewBox="0 0 24.4 20"><path fill="#c8c8c8" d="M0 2.200a2 2 0 0 1 2-2h7.800a2 2 0 0 1 1.500 0.700l2.600 4H22.400a2 2 0 0 1 2 2V18a2 2 0 0 1-2 2H2a2 2 0 0 1-2-2z"/></svg>
<div class="t" style="left:45.8px;top:1007.88px;font-size:24px;color:#c8c8c8;letter-spacing:0.86px;">Project</div>
<svg style="left:179.9px;top:1007.1px;" width="20.2" height="22" viewBox="0 0 20.2 22"><path fill="#c8c8c8" fill-rule="evenodd" d="M2 0H18.100a2 2 0 0 1 2 2V20a2 2 0 0 1-2 2H2a2 2 0 0 1-2-2V2a2 2 0 0 1 2-2z M1.800 3.500v1.700H13.900v-1.700z M1.800 7.500v1.700H17.600v-1.700z M1.800 11.500v1.700H13.900v-1.700z M1.800 15.800v1.700H17.600v-1.700z"/></svg>
<div class="t" style="left:209.6px;top:1007.88px;font-size:24px;color:#c8c8c8;letter-spacing:0.62px;">Console</div>
<svg style="left:2123px;top:1006px;" width="17" height="21" viewBox="0 0 17 21"><g fill="none" stroke="#d0d0d0"><path stroke-width="2.400" d="M13.300 10.600V5.500A5.100 5.100 0 0 0 3.300 4.300"/><rect x="1.700" y="11.670" width="13.550" height="7.700" rx="0.800" stroke-width="2.200"/></g></svg>
<svg style="left:2162px;top:1005px;" width="8" height="24" viewBox="0 0 8 24"><circle cx="4" cy="4.45" r="2.6" fill="#c8c8c8"/><circle cx="4" cy="12" r="2.6" fill="#c8c8c8"/><circle cx="4" cy="19.55" r="2.6" fill="#c8c8c8"/></svg>
<div style="left:0px;top:1037px;width:2192px;height:40px;background:#3c3c3c;"></div>
<svg style="left:14.1px;top:1044.9px;" width="24" height="24" viewBox="0 0 24 24"><path d="M10 0h4v10h10v4H14v10h-4V14H0v-4h10z" fill="#808080"/></svg>
<svg style="left:46.65px;top:1052.75px;" width="14.7" height="9.3" viewBox="0 0 14.7 9.3"><path d="M0 0H14.7 L7.35 9.3Z" fill="#808080"/></svg>
<div style="left:1262.5px;top:1041px;width:635px;height:32px;background:#282828;border-radius:7px;border:1px solid #1d1d1d;border-top-color:#0d0d0d;box-sizing:border-box;overflow:hidden;"><div style="left:600px;top:0;width:40px;height:32px;background:#3a3a3a;border-left:2.500px solid #222;"></div></div>
<svg style="left:1272px;top:1050px;" width="15" height="15" viewBox="0 0 15 15"><g fill="none" stroke="#c4c4c4" stroke-width="2"><circle cx="5.500" cy="5.500" r="4.200"/><path d="M8.500 8.500l5 5.500" stroke-width="2.600"/></g></svg>
<svg style="left:1868px;top:1044.5px;" width="25.5" height="25" viewBox="0 0 25.5 25"><g fill="none" stroke="#d0d0d0" stroke-width="1.900"><path d="M5.400 14.700V3a1.500 1.500 0 0 1 1.500-1.500H21.800a1.500 1.500 0 0 1 1.500 1.500V17.200a1.500 1.500 0 0 1-1.500 1.500H9.400"/><rect x="1" y="15.600" width="7.600" height="7.600"/><path d="M6.500 20L18.200 7.600M12.200 7.600H18.200V13.600"/></g></svg>
<div style="left:1902px;top:1037px;width:2px;height:40px;background:#2f2f2f;"></div>
<div style="left:1954px;top:1037px;width:2px;height:40px;background:#2f2f2f;"></div>
<div style="left:2006px;top:1037px;width:2px;height:40px;background:#2f2f2f;"></div>
<div style="left:2058px;top:1037px;width:2px;height:40px;background:#2f2f2f;"></div>
<div style="left:2110px;top:1037px;width:2px;height:40px;background:#2f2f2f;"></div>
<svg style="left:1916px;top:1042px;" width="26" height="28" viewBox="0 0 26 28"><rect x="3" y="1" width="12.100" height="11.300" fill="#c8c8c8"/><path d="M18.200 6.900L25.200 19H14.200z" fill="#c8c8c8"/><circle cx="8" cy="19.900" r="7.700" fill="#3c3c3c"/><circle cx="8" cy="19.900" r="6.900" fill="#c8c8c8"/></svg>
<svg style="left:1969px;top:1046px;" width="22" height="22" viewBox="0 0 22 22"><path fill="#c8c8c8" fill-rule="evenodd" d="M0.400 12.700L12 2L20.200 0.900V9.400L8.100 20.900z M14.900 4.600a1.400 1.400 0 1 0 0 2.800a1.400 1.400 0 0 0 0-2.800z"/></svg>
<svg style="left:2018.7px;top:1042.8px;" width="26.6" height="26.4" viewBox="0 0 26.6 26.4"><path fill="#c8c8c8" fill-rule="evenodd" d="M7.800 0H18.800L26.600 7.700V18.700L18.800 26.400H7.800L0 18.700V7.700z M11.500 4.100L12.300 17H14.300L15.100 4.100z M13.300 17.600a1.900 1.900 0 1 0 0 3.800a1.900 1.900 0 0 0 0-3.800z"/></svg>
<svg style="left:2073px;top:1044.6px;" width="24.1" height="24.1" viewBox="0 0 24.1 24.1"><path d="M12.05 -0.24L15.38 7.83L24.08 8.5L17.44 14.16L19.49 22.65L12.05 18.07L4.61 22.65L6.66 14.16L0.02 8.5L8.72 7.83z" fill="#8a8a8a"/></svg>
<svg style="left:2123px;top:1049px;" width="29" height="17" viewBox="0 0 29 17"><path fill="none" stroke="#757575" stroke-width="1.900" d="M1 8.500C6 2 11 1 14.500 1S23 2 28 8.500C23 15 18 16 14.500 16S6 15 1 8.500z"/><circle cx="14.500" cy="7" r="5.800" fill="#757575"/></svg>
<div class="t" style="left:2156.5px;top:1045.68px;font-size:24px;color:#c8c8c8;letter-spacing:-0.1px;">29</div>
<div style="left:0px;top:1077px;width:2192px;height:2px;background:#232323;"></div>
<div style="left:0px;top:1079px;width:388px;height:667px;background:#383838;"></div>
<div style="left:388px;top:1079px;width:26px;height:667px;background:#353535;border-left:1.500px solid #303030;box-sizing:border-box;"></div>
<div style="left:414px;top:1079px;width:2px;height:667px;background:#1f1f1f;"></div>
<svg style="left:9.9px;top:1086.15px;" width="15.6" height="17.7" viewBox="0 0 15.6 17.7"><path d="M0 0V17.7 L15.6 8.85Z" fill="#6a6a6a"/></svg>
<svg style="left:36px;top:1083.2px;" width="24" height="24" viewBox="0 0 24 24"><path d="M12 -0.24L15.32 7.8L23.98 8.47L17.36 14.1L19.41 22.55L12 18L4.59 22.55L6.64 14.1L0.02 8.47L8.68 7.8z" fill="#c8c8c8"/></svg>
<div class="t" style="left:70.4px;top:1081.65px;font-size:23.8px;color:#d6d6d6;font-weight:bold;letter-spacing:0.24px;">Favorites</div>
<svg style="left:9.9px;top:1148.15px;" width="15.6" height="17.7" viewBox="0 0 15.6 17.7"><path d="M0 0V17.7 L15.6 8.85Z" fill="#6a6a6a"/></svg>
<svg style="left:36px;top:1147.1px;" width="24.4" height="20" viewBox="0 0 24.4 20"><path fill="#c8c8c8" d="M0 2.200a2 2 0 0 1 2-2h8.600a2 2 0 0 1 1.500 0.700l2 2.600H22.400a2 2 0 0 1 2 2V18a2 2 0 0 1-2 2H2a2 2 0 0 1-2-2z"/></svg>
<div class="t" style="left:70.4px;top:1143.65px;font-size:23.8px;color:#d6d6d6;font-weight:bold;letter-spacing:0.71px;">Assets</div>
<svg style="left:7.9px;top:1181.9px;" width="18.2" height="15.4" viewBox="0 0 18.2 15.4"><path d="M0 0H18.2 L9.1 15.4Z" fill="#6a6a6a"/></svg>
<svg style="left:36px;top:1179.2px;" width="27.5" height="20" viewBox="0 0 27.5 20"><path fill="none" stroke="#c8c8c8" stroke-width="1.900" d="M1 18.500V2.500a1.500 1.500 0 0 1 1.500-1.500h6.800a1.500 1.500 0 0 1 1.200 0.600l2 2.700H21.500a1.500 1.500 0 0 1 1.500 1.500V8.500"/><path fill="#c8c8c8" d="M6.300 8.300H26.300a0.900 0.900 0 0 1 0.800 1.200L23.900 19a1.500 1.500 0 0 1-1.400 1H1.500z"/></svg>
<div class="t" style="left:70.4px;top:1175.65px;font-size:23.8px;color:#d6d6d6;font-weight:bold;letter-spacing:0.56px;">Packages</div>
<svg style="left:37.9px;top:1212.15px;" width="15.6" height="17.7" viewBox="0 0 15.6 17.7"><path d="M0 0V17.7 L15.6 8.85Z" fill="#6a6a6a"/></svg>
<svg style="left:64px;top:1211.1px;" width="24.4" height="20" viewBox="0 0 24.4 20"><path fill="#c8c8c8" d="M0 2.200a2 2 0 0 1 2-2h8.600a2 2 0 0 1 1.500 0.700l2 2.600H22.400a2 2 0 0 1 2 2V18a2 2 0 0 1-2 2H2a2 2 0 0 1-2-2z"/></svg>
<div class="t" style="left:96.4px;top:1207.68px;font-size:24px;color:#cdcdcd;letter-spacing:0.34px;">2D Sprite</div>
<svg style="left:37.9px;top:1244.15px;" width="15.6" height="17.7" viewBox="0 0 15.6 17.7"><path d="M0 0V17.7 L15.6 8.85Z" fill="#6a6a6a"/></svg>
<svg style="left:64px;top:1243.1px;" width="24.4" height="20" viewBox="0 0 24.4 20"><path fill="#c8c8c8" d="M0 2.200a2 2 0 0 1 2-2h8.600a2 2 0 0 1 1.500 0.700l2 2.600H22.400a2 2 0 0 1 2 2V18a2 2 0 0 1-2 2H2a2 2 0 0 1-2-2z"/></svg>
<div class="t" style="left:96.4px;top:1239.68px;font-size:24px;color:#cdcdcd;letter-spacing:0.55px;">Code Coverage</div>
<svg style="left:37.9px;top:1276.15px;" width="15.6" height="17.7" viewBox="0 0 15.6 17.7"><path d="M0 0V17.7 L15.6 8.85Z" fill="#6a6a6a"/></svg>
<svg style="left:64px;top:1275.1px;" width="24.4" height="20" viewBox="0 0 24.4 20"><path fill="#c8c8c8" d="M0 2.200a2 2 0 0 1 2-2h8.600a2 2 0 0 1 1.500 0.700l2 2.600H22.400a2 2 0 0 1 2 2V18a2 2 0 0 1-2 2H2a2 2 0 0 1-2-2z"/></svg>
<div class="t" style="left:96.4px;top:1271.68px;font-size:24px;color:#cdcdcd;letter-spacing:0.53px;">Custom NUnit</div>
<svg style="left:37.9px;top:1308.15px;" width="15.6" height="17.7" viewBox="0 0 15.6 17.7"><path d="M0 0V17.7 L15.6 8.85Z" fill="#6a6a6a"/></svg>
<svg style="left:64px;top:1307.1px;" width="24.4" height="20" viewBox="0 0 24.4 20"><path fill="#c8c8c8" d="M0 2.200a2 2 0 0 1 2-2h8.600a2 2 0 0 1 1.500 0.700l2 2.600H22.400a2 2 0 0 1 2 2V18a2 2 0 0 1-2 2H2a2 2 0 0 1-2-2z"/></svg>
<div class="t" style="left:96.4px;top:1303.68px;font-size:24px;color:#cdcdcd;letter-spacing:0.33px;">Editor Coroutines</div>
<svg style="left:37.9px;top:1340.15px;" width="15.6" height="17.7" viewBox="0 0 15.6 17.7"><path d="M0 0V17.7 L15.6 8.85Z" fill="#6a6a6a"/></svg>
<svg style="left:64px;top:1339.1px;" width="24.4" height="20" viewBox="0 0 24.4 20"><path fill="#c8c8c8" d="M0 2.200a2 2 0 0 1 2-2h8.600a2 2 0 0 1 1.500 0.700l2 2.600H22.400a2 2 0 0 1 2 2V18a2 2 0 0 1-2 2H2a2 2 0 0 1-2-2z"/></svg>
<div class="t" style="left:96.4px;top:1335.68px;font-size:24px;color:#cdcdcd;letter-spacing:0.29px;">JetBrains Rider Editor</div>
<svg style="left:37.9px;top:1372.15px;" width="15.6" height="17.7" viewBox="0 0 15.6 17.7"><path d="M0 0V17.7 L15.6 8.85Z" fill="#6a6a6a"/></svg>
<svg style="left:64px;top:1371.1px;" width="24.4" height="20" viewBox="0 0 24.4 20"><path fill="#c8c8c8" d="M0 2.200a2 2 0 0 1 2-2h8.600a2 2 0 0 1 1.500 0.700l2 2.600H22.400a2 2 0 0 1 2 2V18a2 2 0 0 1-2 2H2a2 2 0 0 1-2-2z"/></svg>
<div class="t" style="left:96.4px;top:1367.68px;font-size:24px;color:#cdcdcd;letter-spacing:0.55px;">Nethereum</div>
<svg style="left:37.9px;top:1404.15px;" width="15.6" height="17.7" viewBox="0 0 15.6 17.7"><path d="M0 0V17.7 L15.6 8.85Z" fill="#6a6a6a"/></svg>
<svg style="left:64px;top:1403.1px;" width="24.4" height="20" viewBox="0 0 24.4 20"><path fill="#c8c8c8" d="M0 2.200a2 2 0 0 1 2-2h8.600a2 2 0 0 1 1.500 0.700l2 2.600H22.400a2 2 0 0 1 2 2V18a2 2 0 0 1-2 2H2a2 2 0 0 1-2-2z"/></svg>
<div class="t" style="left:96.4px;top:1399.68px;font-size:24px;color:#cdcdcd;letter-spacing:0.79px;">Newtonsoft Json</div>
<svg style="left:37.9px;top:1436.15px;" width="15.6" height="17.7" viewBox="0 0 15.6 17.7"><path d="M0 0V17.7 L15.6 8.85Z" fill="#6a6a6a"/></svg>
<svg style="left:64px;top:1435.1px;" width="24.4" height="20" viewBox="0 0 24.4 20"><path fill="#c8c8c8" d="M0 2.200a2 2 0 0 1 2-2h8.600a2 2 0 0 1 1.500 0.700l2 2.600H22.400a2 2 0 0 1 2 2V18a2 2 0 0 1-2 2H2a2 2 0 0 1-2-2z"/></svg>
<div class="t" style="left:96.4px;top:1431.68px;font-size:24px;color:#cdcdcd;letter-spacing:0.57px;">Profile Analyzer</div>
<svg style="left:35.9px;top:1469.9px;" width="18.2" height="15.4" viewBox="0 0 18.2 15.4"><path d="M0 0H18.2 L9.1 15.4Z" fill="#6a6a6a"/></svg>
<svg style="left:64px;top:1467.2px;" width="27.5" height="20" viewBox="0 0 27.5 20"><path fill="none" stroke="#c8c8c8" stroke-width="1.900" d="M1 18.500V2.500a1.500 1.500 0 0 1 1.500-1.500h6.800a1.500 1.500 0 0 1 1.200 0.600l2 2.700H21.500a1.500 1.500 0 0 1 1.500 1.500V8.500"/><path fill="#c8c8c8" d="M6.300 8.300H26.300a0.900 0.900 0 0 1 0.800 1.200L23.900 19a1.500 1.500 0 0 1-1.400 1H1.500z"/></svg>
<div class="t" style="left:96.4px;top:1463.68px;font-size:24px;color:#cdcdcd;letter-spacing:0.49px;">Reown.AppKit.Unity</div>
<svg style="left:92px;top:1499.1px;" width="24.4" height="20" viewBox="0 0 24.4 20"><path fill="#c8c8c8" d="M0 2.200a2 2 0 0 1 2-2h8.600a2 2 0 0 1 1.500 0.700l2 2.600H22.400a2 2 0 0 1 2 2V18a2 2 0 0 1-2 2H2a2 2 0 0 1-2-2z"/></svg>
<div class="t" style="left:124.4px;top:1495.68px;font-size:24px;color:#cdcdcd;letter-spacing:0.37px;">Plugins</div>
<div style="left:0px;top:1524px;width:388px;height:32px;background:#4d4d4d;"></div>
<svg style="left:92px;top:1531.1px;" width="24.4" height="20" viewBox="0 0 24.4 20"><path fill="#c8c8c8" d="M0 2.200a2 2 0 0 1 2-2h8.600a2 2 0 0 1 1.500 0.700l2 2.600H22.400a2 2 0 0 1 2 2V18a2 2 0 0 1-2 2H2a2 2 0 0 1-2-2z"/></svg>
<div class="t" style="left:124.4px;top:1527.68px;font-size:24px;color:#cdcdcd;letter-spacing:0.47px;">Prefabs</div>
<svg style="left:65.9px;top:1564.15px;" width="15.6" height="17.7" viewBox="0 0 15.6 17.7"><path d="M0 0V17.7 L15.6 8.85Z" fill="#6a6a6a"/></svg>
<svg style="left:92px;top:1563.1px;" width="24.4" height="20" viewBox="0 0 24.4 20"><path fill="#c8c8c8" d="M0 2.200a2 2 0 0 1 2-2h8.600a2 2 0 0 1 1.500 0.700l2 2.600H22.400a2 2 0 0 1 2 2V18a2 2 0 0 1-2 2H2a2 2 0 0 1-2-2z"/></svg>
<div class="t" style="left:124.4px;top:1559.68px;font-size:24px;color:#cdcdcd;letter-spacing:0.31px;">Resources</div>
<svg style="left:65.9px;top:1596.15px;" width="15.6" height="17.7" viewBox="0 0 15.6 17.7"><path d="M0 0V17.7 L15.6 8.85Z" fill="#6a6a6a"/></svg>
<svg style="left:92px;top:1595.1px;" width="24.4" height="20" viewBox="0 0 24.4 20"><path fill="#c8c8c8" d="M0 2.200a2 2 0 0 1 2-2h8.600a2 2 0 0 1 1.500 0.700l2 2.600H22.400a2 2 0 0 1 2 2V18a2 2 0 0 1-2 2H2a2 2 0 0 1-2-2z"/></svg>
<div class="t" style="left:124.4px;top:1591.68px;font-size:24px;color:#cdcdcd;letter-spacing:0.25px;">Runtime</div>
<svg style="left:92px;top:1627.1px;" width="24.4" height="20" viewBox="0 0 24.4 20"><path fill="#c8c8c8" d="M0 2.200a2 2 0 0 1 2-2h8.600a2 2 0 0 1 1.500 0.700l2 2.600H22.400a2 2 0 0 1 2 2V18a2 2 0 0 1-2 2H2a2 2 0 0 1-2-2z"/></svg>
<div class="t" style="left:124.4px;top:1623.68px;font-size:24px;color:#cdcdcd;letter-spacing:0.95px;">UI Toolkit</div>
<svg style="left:37.9px;top:1660.15px;" width="15.6" height="17.7" viewBox="0 0 15.6 17.7"><path d="M0 0V17.7 L15.6 8.85Z" fill="#6a6a6a"/></svg>
<svg style="left:64px;top:1659.1px;" width="24.4" height="20" viewBox="0 0 24.4 20"><path fill="#c8c8c8" d="M0 2.200a2 2 0 0 1 2-2h8.600a2 2 0 0 1 1.500 0.700l2 2.600H22.400a2 2 0 0 1 2 2V18a2 2 0 0 1-2 2H2a2 2 0 0 1-2-2z"/></svg>
<div class="t" style="left:96.4px;top:1655.68px;font-size:24px;color:#cdcdcd;letter-spacing:0.4px;">Reown.Core</div>
<svg style="left:37.9px;top:1692.15px;" width="15.6" height="17.7" viewBox="0 0 15.6 17.7"><path d="M0 0V17.7 L15.6 8.85Z" fill="#6a6a6a"/></svg>
<svg style="left:64px;top:1691.1px;" width="24.4" height="20" viewBox="0 0 24.4 20"><path fill="#c8c8c8" d="M0 2.200a2 2 0 0 1 2-2h8.600a2 2 0 0 1 1.500 0.700l2 2.600H22.400a2 2 0 0 1 2 2V18a2 2 0 0 1-2 2H2a2 2 0 0 1-2-2z"/></svg>
<div class="t" style="left:96.4px;top:1687.68px;font-size:24px;color:#cdcdcd;letter-spacing:0.32px;">Reown.Core.Common</div>
<svg style="left:37.9px;top:1724.15px;" width="15.6" height="17.7" viewBox="0 0 15.6 17.7"><path d="M0 0V17.7 L15.6 8.85Z" fill="#6a6a6a"/></svg>
<svg style="left:64px;top:1723.1px;" width="24.4" height="20" viewBox="0 0 24.4 20"><path fill="#c8c8c8" d="M0 2.200a2 2 0 0 1 2-2h8.600a2 2 0 0 1 1.500 0.700l2 2.600H22.400a2 2 0 0 1 2 2V18a2 2 0 0 1-2 2H2a2 2 0 0 1-2-2z"/></svg>
<div class="t" style="left:96.4px;top:1719.68px;font-size:24px;color:#cdcdcd;letter-spacing:0.5px;">Reown.Core.Crypto</div>
<svg style="left:394.45px;top:1090.4px;" width="14.7" height="8.8" viewBox="0 0 14.7 8.8"><path d="M0 8.8 H14.7 L7.35 0Z" fill="#c0c0c0"/></svg>
<svg style="left:394.65px;top:1735.15px;" width="14.7" height="9.7" viewBox="0 0 14.7 9.7"><path d="M0 0H14.7 L7.35 9.7Z" fill="#c0c0c0"/></svg>
<div style="left:392px;top:1111px;width:20px;height:355.6px;background:#5f5f5f;border-radius:10px;"></div>
<div style="left:416px;top:1079px;width:1776px;height:42px;background:#414141;"></div>
<div style="left:416px;top:1121px;width:1776px;height:593px;background:#333333;"></div>
<div style="left:416px;top:1714px;width:1776px;height:32px;background:#404040;"></div>
<div class="t" style="left:424px;top:1086.98px;font-size:24px;color:#c6c6c6;letter-spacing:0.83px;">Packages</div>
<svg style="left:549.5px;top:1088.2px;" width="12" height="22" viewBox="0 0 12 22"><path d="M1.800 3.500L9.800 11L1.800 18.500" fill="none" stroke="#8a8a8a" stroke-width="2.500"/></svg>
<div class="t" style="left:571.5px;top:1086.98px;font-size:24px;color:#c6c6c6;letter-spacing:0.56px;">Reown.AppKit.Unity</div>
<svg style="left:809.5px;top:1088.2px;" width="12" height="22" viewBox="0 0 12 22"><path d="M1.800 3.500L9.800 11L1.800 18.500" fill="none" stroke="#8a8a8a" stroke-width="2.500"/></svg>
<div class="t" style="left:831.5px;top:1087.05px;font-size:23.8px;color:#d6d6d6;font-weight:bold;letter-spacing:0.89px;">Prefabs</div>
<svg style="left:454px;top:1149.5px;" width="105" height="112" viewBox="0 0 105 112"><g fill="#96d5f8" stroke="#96d5f8" stroke-width="4" stroke-linejoin="round"><path d="M51.900 2.300L96.600 21.500L51.900 44.600L7.400 21.500z"/><path d="M2 30.400L45.800 54.300V108.300L2 83.600z"/><path d="M58.100 54.300L102.300 30.400V83.600L58.100 108.300z"/></g></svg>
<div class="t" style="left:454.3px;top:1275.32px;font-size:20.3px;color:#d6d6d6;letter-spacing:0.25px;">Reown Ap...</div>
<div style="left:2050px;top:1733px;width:110px;height:4px;background:#5e5e5e;"></div>
<div style="left:2103.9px;top:1724.8px;width:20.2px;height:20.2px;background:#999999;border-radius:10.1px;"></div>
</div></body></html>
